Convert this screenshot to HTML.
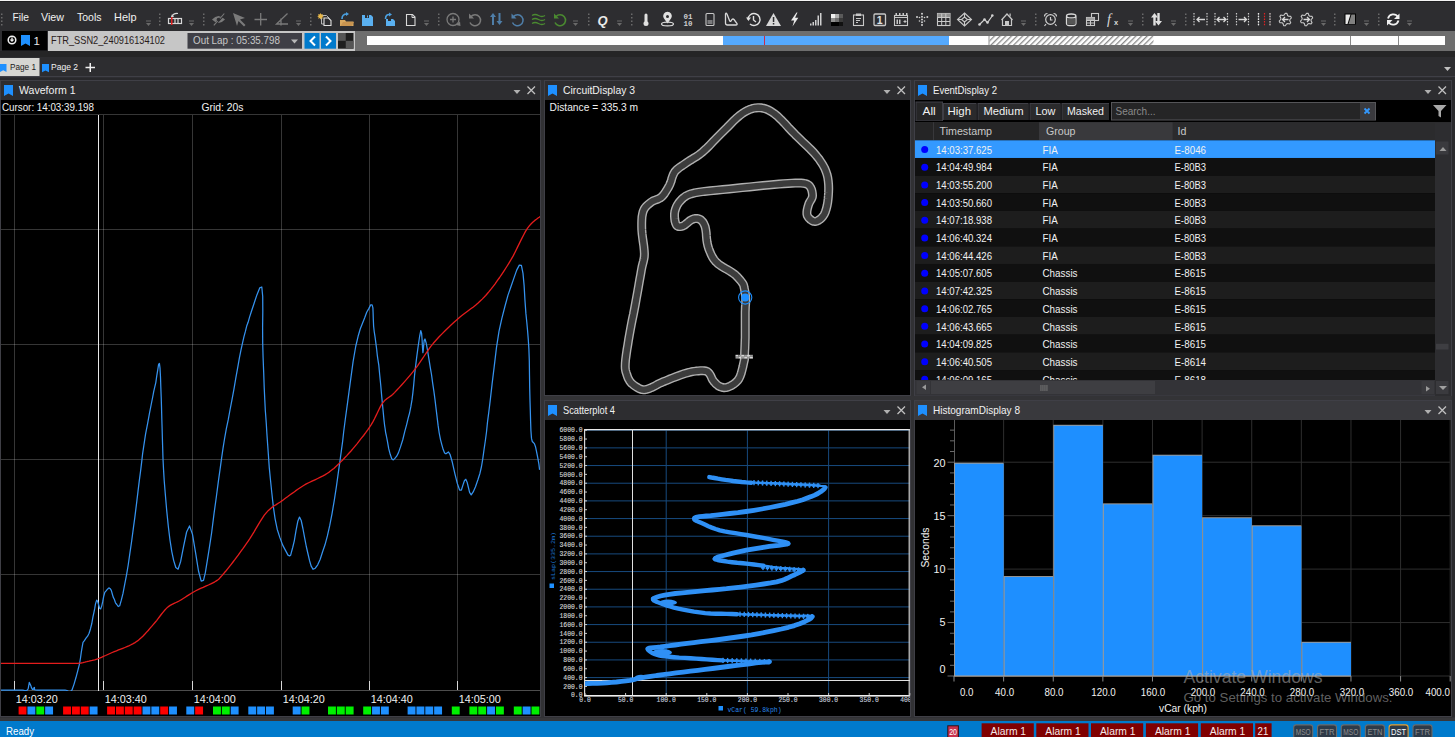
<!DOCTYPE html>
<html><head><meta charset="utf-8">
<style>*{margin:0;padding:0}html,body{width:1455px;height:737px;overflow:hidden;background:#2d2d30}svg{display:block;font-family:"Liberation Sans",sans-serif}</style>
</head><body>
<svg width="1455" height="737" viewBox="0 0 1455 737">
<rect x="0" y="0" width="1455" height="737" fill="#2d2d30"/>

<defs>
<g id="dd"><rect x="0" y="20.5" width="5" height="1" fill="#6a6a6a"/><path d="M0 23h5l-2.5 3z" fill="#6a6a6a"/></g>
<g id="sp" fill="#6a6a6a"><rect x="0" y="13.5" width="1.5" height="1.5"/><rect x="0" y="17" width="1.5" height="1.5"/><rect x="0" y="20.5" width="1.5" height="1.5"/><rect x="0" y="24" width="1.5" height="1.5"/></g>
</defs>
<rect x="0" y="0" width="1455" height="1" fill="#f4f4f4"/><rect x="0" y="1" width="1455" height="1" fill="#1f1f21"/>
<use href="#sp" x="1"/>
<use href="#dd" x="146"/><use href="#sp" x="159"/>
<!-- mixer icon -->
<g fill="none" stroke="#d8d8d8" stroke-width="1.2"><rect x="168.5" y="18.5" width="13" height="5"/><path d="M175 18.5v5M178 18.5v5"/><path d="M172 17 q1-4 6-3.5" /></g><path d="M172 14l2 3h-3z" fill="#d8d8d8"/><rect x="171" y="17" width="1.5" height="8" fill="#e02020"/>
<use href="#dd" x="189"/><use href="#sp" x="203"/>
<!-- eye slash -->
<path d="M212 19.5q6.5-7 13 0q-6.5 7-13 0z" fill="#7a7a7a"/><path d="M214.5 25l10-11" stroke="#2d2d30" stroke-width="2.2"/><path d="M213.8 25.3l10.5-11.8" stroke="#7a7a7a" stroke-width="1.1"/><circle cx="218.5" cy="19.5" r="1.8" fill="#2d2d30"/>
<!-- arrow cursor -->
<path d="M233 13l12 5-5 1.5 5.5 5.5-1.5 1.5-5.5-5.5-1.5 5z" fill="#7a7a7a"/>
<!-- crosshair -->
<g stroke="#7a7a7a" stroke-width="1.3"><path d="M254.5 19.5h12.5M260.7 13v12.5"/></g>
<!-- angle -->
<g stroke="#7a7a7a" stroke-width="1.3" fill="none"><path d="M287.5 13.5l-11 10.5h11.5M281 18.5v7"/></g>
<use href="#dd" x="296"/><use href="#sp" x="310"/>
<!-- new docs -->
<path d="M321.5 15.5h5l2.5 2.5v6h-7.5z" fill="none" stroke="#b8b8b8" stroke-width="1"/>
<path d="M324 18h4.5l2.5 2.5v5h-7z" fill="#2d2d30" stroke="#e0e0e0" stroke-width="1.1"/>
<path d="M320.5 13l.8 1.5 1.6-.6-.6 1.6 1.5.8-1.5.8.6 1.6-1.6-.6-.8 1.5-.8-1.5-1.6.6.6-1.6-1.5-.8 1.5-.8-.6-1.6 1.6.6z" fill="#e8b84a"/>
<!-- open folder -->
<path d="M340 20h5l1 1.5h7.5v4.5h-13.5z" fill="#d8a860"/><path d="M340.5 26l2.5-4h11l-2.5 4z" fill="#c89450"/>
<path d="M342 19q0-5 5-5" fill="none" stroke="#4aa0e0" stroke-width="1.6"/><path d="M346 12l3 2-3 2z" fill="#4aa0e0"/>
<!-- save -->
<path d="M362 15h9l2 2v9h-11z" fill="#5ab0f0"/><rect x="365" y="15" width="4" height="3" fill="#2d2d30"/><rect x="367" y="15.5" width="1" height="2" fill="#5ab0f0"/>
<!-- save as -->
<path d="M386 19h7l2 2v5h-9z" fill="#5ab0f0"/><path d="M385.5 19q0-5 4.5-4.5" fill="none" stroke="#4aa0e0" stroke-width="1.6"/><path d="M389 12.5l3 2-3 2z" fill="#4aa0e0"/><rect x="388" y="19" width="3" height="2" fill="#2d2d30"/>
<!-- blank doc -->
<path d="M406.5 14.5h6l2.5 2.5v8.5h-8.5z" fill="none" stroke="#d8d8d8" stroke-width="1.1"/><path d="M412 14.5v3h3" fill="none" stroke="#d8d8d8" stroke-width="1"/>
<use href="#dd" x="424"/><use href="#sp" x="438"/>
<!-- zoom plus -->
<g fill="none" stroke="#7a7a7a" stroke-width="1.3"><circle cx="453" cy="19.5" r="6"/><path d="M450 19.5h6M453 16.5v6"/></g><path d="M456 25l4.5 1-.5-4.5z" fill="#7a7a7a"/>
<!-- undo gray -->
<g fill="none" stroke="#7a7a7a" stroke-width="1.5"><path d="M471 16.5a5.5 5.5 0 1 1 -1 6"/></g><path d="M469 13.5v5h5z" fill="#7a7a7a"/>
<!-- up down arrows blue gray -->
<g fill="#4f7ea8"><path d="M490 17l3-4 3 4h-2v8h-2v-8z"/><path d="M496.5 21h2v-8h2v8h2l-3 4z"/></g>
<!-- undo blue -->
<g fill="none" stroke="#4f7ea8" stroke-width="1.5"><path d="M513.5 16.5a5.5 5.5 0 1 1 -1 6"/></g><path d="M511.5 13.5v5h5z" fill="#4f7ea8"/>
<!-- waves green -->
<g fill="none" stroke="#4a8a30" stroke-width="1.3"><path d="M532 15.5q3-2 6.5 0t6.5 0M532 19.5q3-2 6.5 0t6.5 0M532 23.5q3-2 6.5 0t6.5 0"/></g>
<!-- undo green -->
<g fill="none" stroke="#4a8a30" stroke-width="1.6"><path d="M556 16.5a5.5 5.5 0 1 1 -1 6"/></g><path d="M554 13.5v5h5z" fill="#4a8a30"/>
<use href="#dd" x="573"/><use href="#sp" x="588"/>
<text x="597.5" y="24.5" font-family="Liberation Sans" font-weight="bold" font-style="italic" font-size="13" fill="#e8e8e8">Q</text>
<use href="#dd" x="617"/><use href="#sp" x="631"/>
<!-- thermometer -->
<rect x="644.5" y="13.5" width="3" height="9" rx="1.5" fill="#e0e0e0"/><circle cx="646" cy="23.5" r="2.5" fill="#e0e0e0"/>
<!-- location -->
<path d="M667.5 23.5l-3.8-5.5a4.3 4.3 0 1 1 7.6 0z" fill="#e0e0e0"/><circle cx="667.5" cy="16.5" r="1.5" fill="#2d2d30"/><ellipse cx="667.5" cy="24" rx="6" ry="1.9" fill="none" stroke="#d8d8d8" stroke-width="1.2"/>
<text x="683.5" y="19" font-family="Liberation Mono" font-weight="bold" font-size="7.5" fill="#d0d0d0">01</text><text x="683.5" y="26" font-family="Liberation Mono" font-weight="bold" font-size="7.5" fill="#d0d0d0">10</text>
<!-- phone -->
<rect x="706" y="13.5" width="8" height="12" rx="1" fill="none" stroke="#c8c8c8" stroke-width="1.1"/><path d="M707.5 21h5M707.5 23h5" stroke="#c8c8c8" stroke-width="1"/>
<!-- track -->
<path d="M725.5 14v9q0 2 2 2h8.5q1.5 0 1-1.5l-3-4q-1-1-2 0l-1 1.5q-1 1-1.5-.5l-2.5-6.5q-1-1.5-1.5 0z" fill="none" stroke="#d8d8d8" stroke-width="1.3"/>
<!-- history -->
<g fill="none" stroke="#e0e0e0" stroke-width="1.4"><path d="M748 19.5a6 6 0 1 1 2 4.5"/><path d="M753.5 16v4l2.5 2"/></g><path d="M746 17.5l2.5 3.5 2.5-3.5z" fill="#e0e0e0"/>
<!-- warning -->
<path d="M773.5 13l7.5 13h-15z" fill="#d8d8d8"/><rect x="772.8" y="17" width="1.5" height="5" fill="#2d2d30"/><rect x="772.8" y="23" width="1.5" height="1.5" fill="#2d2d30"/>
<!-- lightning -->
<path d="M796.5 12.5l-5.5 8h3.2l-1.7 6 5.8-8.7h-3.2l2.4-5.3z" fill="#e8e8e8"/>
<!-- signal bars -->
<g fill="#d0d0d0"><rect x="810" y="23.5" width="1.5" height="2"/><rect x="812.5" y="22" width="1.5" height="3.5"/><rect x="815" y="20" width="1.5" height="5.5"/><rect x="817.5" y="15.5" width="1.5" height="10"/><rect x="820" y="13" width="1.5" height="12.5"/></g>
<!-- heatmap -->
<rect x="831" y="14" width="4" height="4" fill="#f0f0f0"/><rect x="835" y="14" width="4" height="4" fill="#b0b0b0"/><rect x="839" y="14" width="4" height="4" fill="#5a5a5a"/>
<rect x="831" y="18" width="4" height="4" fill="#909090"/><rect x="835" y="18" width="4" height="4" fill="#707070"/><rect x="839" y="18" width="4" height="4" fill="#3a3a3a"/>
<rect x="831" y="22" width="4" height="4" fill="#000"/><rect x="835" y="22" width="4" height="4" fill="#000"/><rect x="839" y="22" width="4" height="4" fill="#111"/>
<!-- clipboard -->
<g fill="none" stroke="#c8c8c8" stroke-width="1.1"><rect x="853.5" y="15" width="10" height="10.5"/><path d="M856 18.5h5M856 20.5h4M856 22.5h2"/></g><rect x="856" y="13.5" width="5" height="2.5" fill="#c8c8c8"/>
<!-- 1 box -->
<rect x="874" y="14" width="11.5" height="11.5" rx="1" fill="none" stroke="#c8c8c8" stroke-width="1.3"/><text x="876.8" y="23.8" font-family="Liberation Sans" font-weight="bold" font-size="10.5" fill="#e0e0e0">1</text>
<!-- calendar -->
<rect x="894.5" y="15.5" width="13" height="10" fill="none" stroke="#c8c8c8" stroke-width="1.1"/><path d="M894.5 17.5h13" stroke="#c8c8c8"/><g fill="#c8c8c8"><rect x="895.5" y="13" width="1.5" height="2"/><rect x="899" y="13" width="1.5" height="2"/><rect x="902.5" y="13" width="1.5" height="2"/><rect x="906" y="13" width="1.5" height="2"/><rect x="896.5" y="19.5" width="1.5" height="4.5"/><rect x="899" y="19.5" width="1.5" height="4.5"/></g><path d="M903.5 21.5h3M905 20v3" stroke="#c8c8c8"/>
<!-- dots cross -->
<g fill="#d0d0d0"><circle cx="922" cy="13.8" r="1"/><circle cx="922" cy="16.8" r="1"/><circle cx="922" cy="19.5" r="1"/><circle cx="922" cy="22.3" r="1"/><circle cx="922" cy="25" r="1"/><circle cx="917" cy="17" r="1"/><circle cx="919.5" cy="17.5" r="0.8"/><circle cx="924.5" cy="17.5" r="0.8"/><circle cx="927.3" cy="17" r="1"/><circle cx="919.5" cy="21" r="0.8"/><circle cx="924.5" cy="21" r="0.8"/></g>
<!-- grid table -->
<rect x="937.5" y="13.5" width="12.5" height="12" fill="none" stroke="#c8c8c8" stroke-width="1.1"/><rect x="937.5" y="13.5" width="12.5" height="4" fill="#909090"/><path d="M937.5 17.5h12.5M937.5 21.5h12.5M941.7 13.5v12M945.8 13.5v12" stroke="#c8c8c8" stroke-width="1"/>
<!-- codepen -->
<g fill="none" stroke="#c8c8c8" stroke-width="1.1"><path d="M964.5 13l7 6.5-7 6.5-7-6.5z"/><path d="M964.5 17l3 2.5-3 2.5-3-2.5z"/><path d="M964.5 13v4M964.5 22v4M957.5 19.5h4M967.5 19.5h4"/></g>
<!-- line chart -->
<path d="M979.5 24.5l5-5 3 3 5-7" fill="none" stroke="#d0d0d0" stroke-width="1.2"/><g fill="#d0d0d0"><circle cx="979.5" cy="24.5" r="1.3"/><circle cx="984.5" cy="19.5" r="1.3"/><circle cx="987.5" cy="22.5" r="1.3"/><circle cx="992.3" cy="15.5" r="1.3"/></g>
<!-- home -->
<path d="M1001.5 20l5.5-6 5.5 6M1002.5 19v6.5h9v-6.5" fill="none" stroke="#c8c8c8" stroke-width="1.2"/><rect x="1005" y="21" width="4" height="4.5" fill="#c8c8c8"/><rect x="1009.5" y="13.5" width="1.2" height="3" fill="#c8c8c8"/>
<use href="#dd" x="1021"/><use href="#sp" x="1035"/>
<!-- alarm -->
<g fill="none" stroke="#d0d0d0" stroke-width="1.2"><circle cx="1050.5" cy="19.5" r="4.8"/><path d="M1050.5 17v3h2M1046 24l-1.5 2M1055 24l1.5 2"/><path d="M1044.5 16.5q0-3 3-3M1056.5 16.5q0-3-3-3"/></g>
<!-- cylinder -->
<g fill="none" stroke="#d8d8d8" stroke-width="1.3"><path d="M1066.5 16.5v7q0 2.2 4.7 2.2t4.7-2.2v-7"/><ellipse cx="1071.2" cy="16" rx="4.7" ry="2"/></g><rect x="1067" y="18.5" width="8.5" height="6" fill="#555"/>
<!-- table window -->
<g fill="none" stroke="#c8c8c8" stroke-width="1.1"><rect x="1091.5" y="13.5" width="7" height="7"/><rect x="1086.5" y="17.5" width="8" height="8" fill="#2d2d30"/><path d="M1086.5 20.5h8M1086.5 23h8M1090.5 17.5v8"/></g><rect x="1086.5" y="17.5" width="8" height="2.5" fill="#a0a0a0"/>
<!-- fx -->
<text x="1107" y="24" font-family="Liberation Serif" font-style="italic" font-size="14" fill="#d8d8d8">f</text><text x="1114" y="24.5" font-family="Liberation Sans" font-weight="bold" font-size="7.5" fill="#d8d8d8">x</text>
<use href="#dd" x="1128"/><use href="#sp" x="1142"/>
<!-- up down white -->
<g fill="#e0e0e0"><path d="M1151 17.5l3.5-4.5 3.5 4.5h-2.3v8h-2.4v-8z"/><path d="M1157.3 13h2.4v8h2.3l-3.5 4.5-3.5-4.5h2.3z"/></g>
<use href="#dd" x="1171"/><use href="#sp" x="1185"/>
<!-- range icons -->
<g stroke="#c8c8c8" stroke-width="1.2" stroke-dasharray="1.5 1.2"><path d="M1194 13v13M1207 13v13M1215 13v13M1227.5 13v13M1236.5 13v13M1248.5 13v13M1258.5 13v13M1270 13v13"/></g>
<path d="M1258.5 13v13" stroke="#e8e8e8" stroke-width="1.2" stroke-dasharray="1.5 1.2"/><path d="M1264.5 13v13" stroke="#e02020" stroke-width="1.2" stroke-dasharray="1.5 1.2"/><path d="M1270 13v13" stroke="#9a8a8a" stroke-width="1.2" stroke-dasharray="1.5 1.2"/>
<g fill="none" stroke="#d8d8d8" stroke-width="1.3"><path d="M1205 19.5h-8M1199.5 17l-2.5 2.5 2.5 2.5"/><path d="M1217 19.5h9M1219.5 17l-2.5 2.5 2.5 2.5M1223.5 17l2.5 2.5-2.5 2.5"/><path d="M1238.5 19.5h8M1244 17l2.5 2.5-2.5 2.5"/></g>
<!-- gears -->
<g fill="none" stroke="#c8c8c8" stroke-width="1.1" stroke-linejoin="round"><path d="M1285.30 13.20 L1286.93 13.41 L1287.60 15.52 L1288.55 16.25 L1290.76 16.35 L1291.39 17.87 L1289.90 19.50 L1289.74 20.69 L1290.76 22.65 L1289.75 23.95 L1287.60 23.48 L1286.49 23.94 L1285.30 25.80 L1283.67 25.59 L1283.00 23.48 L1282.05 22.75 L1279.84 22.65 L1279.21 21.13 L1280.70 19.50 L1280.86 18.31 L1279.84 16.35 L1280.85 15.05 L1283.00 15.52 L1284.11 15.06Z"/><path d="M1306.60 13.20 L1308.23 13.41 L1308.90 15.52 L1309.85 16.25 L1312.06 16.35 L1312.69 17.87 L1311.20 19.50 L1311.04 20.69 L1312.06 22.65 L1311.05 23.95 L1308.90 23.48 L1307.79 23.94 L1306.60 25.80 L1304.97 25.59 L1304.30 23.48 L1303.35 22.75 L1301.14 22.65 L1300.51 21.13 L1302.00 19.50 L1302.16 18.31 L1301.14 16.35 L1302.15 15.05 L1304.30 15.52 L1305.41 15.06Z"/></g>
<path d="M1288.5 19.5h-6M1285 17l-2.5 2.5 2.5 2.5M1303.5 19.5h6M1307 17l2.5 2.5-2.5 2.5" fill="none" stroke="#d8d8d8" stroke-width="1.3"/>
<use href="#dd" x="1321"/><use href="#sp" x="1334"/>
<!-- contrast -->
<rect x="1344.5" y="13.5" width="11.5" height="11" fill="#000"/><path d="M1345.5 14.5h5l-3 9.5h-2z" fill="#e8e8e8"/><path d="M1351.5 14.5h3.5v9.5h-6.5z" fill="#808080"/>
<use href="#dd" x="1364"/><use href="#sp" x="1378"/>
<!-- refresh -->
<g fill="none" stroke="#f0f0f0" stroke-width="1.8"><path d="M1388 18.5a5.5 5.5 0 0 1 10-1.5"/><path d="M1398.5 20.5a5.5 5.5 0 0 1 -10 1.5"/></g><path d="M1399.5 13.5v5.5h-5.5z" fill="#f0f0f0"/><path d="M1387 25.5v-5.5h5.5z" fill="#f0f0f0"/>
<use href="#dd" x="1407"/>

<text x="12.5" y="21.2" font-size="11.5" fill="#f1f1f1" textLength="16.5" lengthAdjust="spacingAndGlyphs">File</text>
<text x="41" y="21.2" font-size="11.5" fill="#f1f1f1" textLength="23" lengthAdjust="spacingAndGlyphs">View</text>
<text x="77" y="21.2" font-size="11.5" fill="#f1f1f1" textLength="24.5" lengthAdjust="spacingAndGlyphs">Tools</text>
<text x="114" y="21.2" font-size="11.5" fill="#f1f1f1" textLength="22.5" lengthAdjust="spacingAndGlyphs">Help</text>
<rect x="355" y="31" width="1100" height="20" fill="#6e6e6e"/>
<rect x="2" y="31" width="45" height="19.5" fill="#000"/>
<rect x="48" y="31" width="307" height="20" fill="#c6c6c6"/>
<circle cx="12" cy="40" r="3.8" fill="none" stroke="#f0f0f0" stroke-width="1.5"/><path d="M9.5 39.5h5l-2.5 2.5z" fill="#f0f0f0"/><rect x="11.3" y="37.5" width="1.4" height="2.5" fill="#f0f0f0"/>
<path d="M21 35h9v11l-4.5 -2.42l-4.5 2.42z" fill="#1e90ff"/>
<text x="33.5" y="44.5" font-size="11.5" fill="#e8e8e8">1</text>
<text x="51" y="44.3" font-size="11.5" fill="#2a1c1c" textLength="114" lengthAdjust="spacingAndGlyphs">FTR_SSN2_240916134102</text>
<rect x="187.5" y="33" width="114.5" height="15.7" fill="#3f3f46"/>
<text x="193" y="44.3" font-size="11.5" fill="#c8c8c8" textLength="87" lengthAdjust="spacingAndGlyphs">Out Lap : 05:35.798</text>
<path d="M291 39.5h7l-3.5 4z" fill="#b8b8b8"/>
<rect x="304.5" y="33" width="15" height="15.7" fill="#007acc"/>
<rect x="321" y="33" width="15" height="15.7" fill="#007acc"/>
<path d="M315 36.5l-4.5 4.5 4.5 4.5" fill="none" stroke="#fff" stroke-width="2"/><path d="M326 36.5l4.5 4.5-4.5 4.5" fill="none" stroke="#fff" stroke-width="2"/>
<rect x="338" y="33" width="15.5" height="15.7" fill="#1e1e1e"/>
<rect x="338" y="33" width="7.75" height="7.85" fill="#555"/>
<rect x="345.75" y="40.85" width="7.75" height="7.85" fill="#555"/>
<rect x="367" y="36" width="1078" height="9" fill="#ffffff"/>
<rect x="723" y="36" width="226" height="9" fill="#55aaff"/>
<rect x="764" y="36" width="1" height="9" fill="#d02848"/>
<defs><pattern id="hatch" width="4" height="4" patternUnits="userSpaceOnUse" patternTransform="rotate(45)"><rect width="4" height="4" fill="#fff"/><rect width="1.3" height="4" fill="#8a8a8a"/></pattern></defs>
<rect x="989.5" y="36" width="164" height="9" fill="url(#hatch)"/>
<rect x="988.5" y="36" width="1" height="9" fill="#909090"/>
<rect x="1350" y="36" width="1" height="9" fill="#8a8a8a"/>
<rect x="1398" y="36" width="1" height="9" fill="#8a8a8a"/>
<rect x="0" y="51" width="1455" height="6" fill="#252526"/>
<rect x="0" y="57" width="1455" height="19" fill="#2d2d30"/>
<rect x="0" y="58" width="39.5" height="18" fill="#d6d6d2"/>
<path d="M0 64h6.5v8l-3.25 -1.7599999999999998l-3.25 1.7599999999999998z" fill="#1e90ff"/>
<text x="10" y="69.8" font-size="8.7" fill="#1a1a1a" textLength="26" lengthAdjust="spacingAndGlyphs">Page 1</text>
<path d="M42 64h7v8.3l-3.5 -1.8259999999999996l-3.5 1.8259999999999996z" fill="#1e90ff"/>
<text x="51" y="69.8" font-size="8.7" fill="#f1f1f1" textLength="27" lengthAdjust="spacingAndGlyphs">Page 2</text>
<path d="M85.5 67.5h9.5M90.25 63v9" stroke="#f0f0f0" stroke-width="1.5"/>
<path d="M1444 67h7l-3.5 4z" fill="#c0c0c0"/>
<rect x="0" y="76" width="1455" height="1.5" fill="#3f3f46"/>
<rect x="0" y="77.5" width="1455" height="2.5" fill="#28282b"/>
<rect x="0" y="80" width="541" height="637" fill="#3f3f46"/>
<rect x="1" y="81" width="539" height="19" fill="#2d2d30"/>
<rect x="1" y="100" width="539" height="616" fill="#000"/>
<path d="M4 85h9v11l-4.5 -2.42l-4.5 2.42z" fill="#1e90ff"/>
<text x="19" y="94" font-size="11.5" fill="#f1f1f1" textLength="56.5" lengthAdjust="spacingAndGlyphs">Waveform 1</text>
<path d="M513.5 90h7l-3.5 4z" fill="#b0b0b0"/>
<path d="M527.5 86.5l7.5 7.5M535.0 86.5l-7.5 7.5" stroke="#c0c0c0" stroke-width="1.3"/>
<rect x="544" y="80" width="367" height="316" fill="#3f3f46"/>
<rect x="545" y="81" width="365" height="19" fill="#2d2d30"/>
<rect x="545" y="100" width="365" height="295" fill="#000"/>
<path d="M548 85h9v11l-4.5 -2.42l-4.5 2.42z" fill="#1e90ff"/>
<text x="563" y="94" font-size="11.5" fill="#f1f1f1" textLength="72" lengthAdjust="spacingAndGlyphs">CircuitDisplay 3</text>
<path d="M883.5 90h7l-3.5 4z" fill="#b0b0b0"/>
<path d="M897.5 86.5l7.5 7.5M905.0 86.5l-7.5 7.5" stroke="#c0c0c0" stroke-width="1.3"/>
<rect x="914" y="80" width="538" height="316" fill="#3f3f46"/>
<rect x="915" y="81" width="536" height="19" fill="#2d2d30"/>
<rect x="915" y="100" width="536" height="295" fill="#000"/>
<path d="M918 85h9v11l-4.5 -2.42l-4.5 2.42z" fill="#1e90ff"/>
<text x="933" y="94" font-size="11.5" fill="#f1f1f1" textLength="64" lengthAdjust="spacingAndGlyphs">EventDisplay 2</text>
<path d="M1424.5 90h7l-3.5 4z" fill="#b0b0b0"/>
<path d="M1438.5 86.5l7.5 7.5M1446.0 86.5l-7.5 7.5" stroke="#c0c0c0" stroke-width="1.3"/>
<rect x="544" y="400" width="367" height="317" fill="#3f3f46"/>
<rect x="545" y="401" width="365" height="19" fill="#2d2d30"/>
<rect x="545" y="420" width="365" height="296" fill="#000"/>
<path d="M548 405h9v11l-4.5 -2.42l-4.5 2.42z" fill="#1e90ff"/>
<text x="563" y="414" font-size="11.5" fill="#f1f1f1" textLength="52" lengthAdjust="spacingAndGlyphs">Scatterplot 4</text>
<path d="M883.5 410h7l-3.5 4z" fill="#b0b0b0"/>
<path d="M897.5 406.5l7.5 7.5M905.0 406.5l-7.5 7.5" stroke="#c0c0c0" stroke-width="1.3"/>
<rect x="914" y="400" width="538" height="317" fill="#3f3f46"/>
<rect x="915" y="401" width="536" height="19" fill="#39393d"/>
<rect x="915" y="420" width="536" height="296" fill="#000"/>
<path d="M918 405h9v11l-4.5 -2.42l-4.5 2.42z" fill="#1e90ff"/>
<text x="933" y="414" font-size="11.5" fill="#f1f1f1" textLength="87" lengthAdjust="spacingAndGlyphs">HistogramDisplay 8</text>
<path d="M1424.5 410h7l-3.5 4z" fill="#b0b0b0"/>
<path d="M1438.5 406.5l7.5 7.5M1446.0 406.5l-7.5 7.5" stroke="#c0c0c0" stroke-width="1.3"/>
<rect x="541" y="80" width="3" height="637" fill="#313134"/>
<rect x="911" y="80" width="3" height="637" fill="#313134"/>
<rect x="544" y="396" width="908" height="4" fill="#333336"/>
<rect x="1452" y="77" width="3" height="640" fill="#2a2a2d"/>
<rect x="0" y="717.5" width="1455" height="3.5" fill="#37373a"/>
<text x="2" y="111" font-size="11" fill="#f1f1f1" textLength="92" lengthAdjust="spacingAndGlyphs">Cursor: 14:03:39.198</text>
<text x="201.5" y="111" font-size="11" fill="#f1f1f1" textLength="42" lengthAdjust="spacingAndGlyphs">Grid: 20s</text>
<rect x="1" y="114" width="539" height="1" fill="rgba(255,255,255,0.21)"/>
<rect x="1" y="229" width="539" height="1" fill="rgba(255,255,255,0.21)"/>
<rect x="1" y="344" width="539" height="1" fill="rgba(255,255,255,0.21)"/>
<rect x="1" y="459" width="539" height="1" fill="rgba(255,255,255,0.21)"/>
<rect x="1" y="574" width="539" height="1" fill="rgba(255,255,255,0.21)"/>
<rect x="1" y="690" width="539" height="1" fill="rgba(255,255,255,0.3)"/>
<rect x="14" y="115" width="1" height="575" fill="rgba(255,255,255,0.21)"/>
<rect x="103" y="115" width="1" height="575" fill="rgba(255,255,255,0.21)"/>
<rect x="192" y="115" width="1" height="575" fill="rgba(255,255,255,0.21)"/>
<rect x="281" y="115" width="1" height="575" fill="rgba(255,255,255,0.21)"/>
<rect x="369" y="115" width="1" height="575" fill="rgba(255,255,255,0.21)"/>
<rect x="457" y="115" width="1" height="575" fill="rgba(255,255,255,0.21)"/>
<rect x="98" y="115" width="1" height="576" fill="#e8e8e8"/>
<rect x="14" y="681" width="1" height="9" fill="#d8d8d8"/>
<rect x="103" y="681" width="1" height="9" fill="#d8d8d8"/>
<rect x="192" y="681" width="1" height="9" fill="#d8d8d8"/>
<rect x="281" y="681" width="1" height="9" fill="#d8d8d8"/>
<rect x="369" y="681" width="1" height="9" fill="#d8d8d8"/>
<rect x="457" y="681" width="1" height="9" fill="#d8d8d8"/>
<text x="15.8" y="702.7" font-size="10.3" fill="#f1f1f1" textLength="42" lengthAdjust="spacingAndGlyphs">14:03:20</text>
<text x="104.8" y="702.7" font-size="10.3" fill="#f1f1f1" textLength="42" lengthAdjust="spacingAndGlyphs">14:03:40</text>
<text x="193.8" y="702.7" font-size="10.3" fill="#f1f1f1" textLength="42" lengthAdjust="spacingAndGlyphs">14:04:00</text>
<text x="282.8" y="702.7" font-size="10.3" fill="#f1f1f1" textLength="42" lengthAdjust="spacingAndGlyphs">14:04:20</text>
<text x="370.8" y="702.7" font-size="10.3" fill="#f1f1f1" textLength="42" lengthAdjust="spacingAndGlyphs">14:04:40</text>
<text x="458.8" y="702.7" font-size="10.3" fill="#f1f1f1" textLength="42" lengthAdjust="spacingAndGlyphs">14:05:00</text>
<rect x="18.6" y="706.5" width="7.9" height="8" fill="#ff0000"/>
<rect x="27.45" y="706.5" width="7.9" height="8" fill="#1e90ff"/>
<rect x="36.3" y="706.5" width="7.9" height="8" fill="#00f000"/>
<rect x="45.15" y="706.5" width="7.9" height="8" fill="#1e90ff"/>
<rect x="63.1" y="706.5" width="7.9" height="8" fill="#ff0000"/>
<rect x="71.95" y="706.5" width="7.9" height="8" fill="#ff0000"/>
<rect x="80.8" y="706.5" width="7.9" height="8" fill="#ff0000"/>
<rect x="89.65" y="706.5" width="7.9" height="8" fill="#1e90ff"/>
<rect x="107.1" y="706.5" width="7.9" height="8" fill="#ff0000"/>
<rect x="115.95" y="706.5" width="7.9" height="8" fill="#ff0000"/>
<rect x="124.8" y="706.5" width="7.9" height="8" fill="#ff0000"/>
<rect x="133.65" y="706.5" width="7.9" height="8" fill="#ff0000"/>
<rect x="142.5" y="706.5" width="7.9" height="8" fill="#1e90ff"/>
<rect x="151.35" y="706.5" width="7.9" height="8" fill="#1e90ff"/>
<rect x="160.2" y="706.5" width="7.9" height="8" fill="#ff0000"/>
<rect x="169.05" y="706.5" width="7.9" height="8" fill="#1e90ff"/>
<rect x="186.3" y="706.5" width="7.9" height="8" fill="#1e90ff"/>
<rect x="195.15" y="706.5" width="7.9" height="8" fill="#ff0000"/>
<rect x="213.0" y="706.5" width="7.9" height="8" fill="#00f000"/>
<rect x="221.85" y="706.5" width="7.9" height="8" fill="#00f000"/>
<rect x="230.7" y="706.5" width="7.9" height="8" fill="#1e90ff"/>
<rect x="248.3" y="706.5" width="7.9" height="8" fill="#1e90ff"/>
<rect x="257.15" y="706.5" width="7.9" height="8" fill="#1e90ff"/>
<rect x="266.0" y="706.5" width="7.9" height="8" fill="#1e90ff"/>
<rect x="292.7" y="706.5" width="7.9" height="8" fill="#1e90ff"/>
<rect x="301.55" y="706.5" width="7.9" height="8" fill="#00f000"/>
<rect x="328.0" y="706.5" width="7.9" height="8" fill="#00f000"/>
<rect x="336.85" y="706.5" width="7.9" height="8" fill="#00f000"/>
<rect x="345.7" y="706.5" width="7.9" height="8" fill="#00f000"/>
<rect x="363.2" y="706.5" width="7.9" height="8" fill="#00f000"/>
<rect x="372.05" y="706.5" width="7.9" height="8" fill="#1e90ff"/>
<rect x="380.9" y="706.5" width="7.9" height="8" fill="#1e90ff"/>
<rect x="407.6" y="706.5" width="7.9" height="8" fill="#1e90ff"/>
<rect x="416.45" y="706.5" width="7.9" height="8" fill="#1e90ff"/>
<rect x="425.3" y="706.5" width="7.9" height="8" fill="#1e90ff"/>
<rect x="434.15" y="706.5" width="7.9" height="8" fill="#1e90ff"/>
<rect x="451.8" y="706.5" width="7.9" height="8" fill="#00f000"/>
<rect x="469.4" y="706.5" width="7.9" height="8" fill="#00f000"/>
<rect x="478.25" y="706.5" width="7.9" height="8" fill="#00f000"/>
<rect x="487.1" y="706.5" width="7.9" height="8" fill="#1e90ff"/>
<rect x="495.95" y="706.5" width="7.9" height="8" fill="#00f000"/>
<rect x="513.8" y="706.5" width="7.9" height="8" fill="#00f000"/>
<rect x="522.65" y="706.5" width="7.9" height="8" fill="#1e90ff"/>
<rect x="531.5" y="706.5" width="7.9" height="8" fill="#00f000"/>
<svg x="1" y="100" width="539" height="591" viewBox="1 100 539 591" overflow="hidden">
<polyline points="1.0,690.0 2.6,690.0 4.9,690.0 7.5,690.0 10.0,690.0 12.5,690.0 15.1,690.0 17.7,690.0 20.0,690.0 22.2,690.2 24.3,690.4 26.1,690.5 27.5,690.0 28.3,688.2 28.7,685.7 29.0,684.3 29.3,682.4 29.8,683.5 30.4,684.8 31.0,686.1 31.5,688.0 31.9,688.0 32.3,689.2 32.6,689.4 33.0,689.5 33.4,689.3 33.7,688.6 34.1,687.6 34.4,687.4 34.5,688.2 34.4,689.4 34.6,689.6 35.4,690.0 37.2,690.1 39.6,690.1 42.4,690.0 45.0,690.0 47.5,690.0 50.0,690.0 52.5,690.0 55.0,690.0 57.6,690.0 60.2,690.0 62.7,690.0 65.0,690.0 67.0,690.6 68.7,691.6 70.3,691.8 72.0,690.0 73.9,684.6 75.9,677.8 77.8,670.7 79.4,664.3 80.5,658.0 81.3,652.1 82.0,647.9 83.0,642.4 84.4,640.7 86.0,638.2 87.6,636.2 89.1,633.3 90.5,628.7 91.8,623.5 93.0,616.6 94.0,612.1 94.8,608.2 95.4,604.3 96.0,602.1 96.7,600.2 97.6,601.4 98.6,604.8 99.7,608.5 100.7,608.9 101.7,606.1 102.7,601.7 103.7,596.4 104.8,592.4 106.1,590.9 107.5,589.2 108.9,587.9 110.2,588.7 111.3,590.4 112.3,594.0 113.2,597.1 114.3,599.2 115.5,602.8 116.8,604.5 118.2,606.5 119.7,605.8 121.3,600.2 123.0,593.4 124.8,583.9 126.5,575.2 128.2,565.0 129.9,553.2 131.6,541.5 133.3,528.6 134.9,516.8 136.5,503.9 138.0,491.4 139.4,479.9 140.6,470.9 141.6,462.7 142.6,453.9 143.9,445.2 145.6,433.9 147.6,423.6 149.6,412.6 151.3,404.0 152.7,397.0 153.8,391.1 154.8,386.8 155.8,382.6 156.8,375.7 157.8,369.7 158.6,364.4 159.4,363.4 160.0,367.8 160.5,377.2 160.8,386.6 161.2,396.9 161.5,407.0 161.8,418.3 162.1,427.9 162.4,439.0 162.7,449.0 163.0,459.0 163.5,468.9 164.2,480.5 165.3,494.0 166.7,510.4 168.3,526.2 170.0,540.2 171.8,551.6 173.7,560.6 175.8,567.5 178.1,569.2 180.7,561.2 183.6,546.3 186.6,532.0 189.5,525.9 192.5,534.4 195.6,552.8 198.5,571.0 201.2,581.1 203.5,580.4 205.4,572.4 207.3,560.7 209.3,548.1 211.6,533.0 214.0,513.8 216.4,496.5 218.5,480.4 220.2,468.4 221.6,458.1 223.0,448.4 224.5,439.0 226.3,428.8 228.2,419.9 230.1,409.5 232.0,399.7 233.9,389.3 235.8,378.2 237.7,367.7 239.4,357.9 241.0,349.9 242.5,343.2 243.9,336.9 245.4,331.4 246.8,325.7 248.1,322.3 249.5,317.4 251.3,311.7 253.8,304.2 256.9,294.9 259.7,287.9 261.8,287.0 262.7,296.3 262.8,311.2 262.6,327.6 262.7,343.6 263.1,357.7 263.7,372.8 264.2,387.6 264.8,400.0 265.3,410.3 265.8,416.8 266.3,423.8 266.9,433.7 267.6,443.8 268.4,455.0 269.3,467.9 270.4,479.3 271.8,492.7 273.3,506.4 275.1,518.8 277.2,529.2 279.8,537.4 282.7,545.1 285.6,550.6 288.0,555.1 289.6,555.9 290.6,555.3 291.5,551.8 292.7,547.5 294.3,540.8 296.0,530.7 297.8,521.3 299.5,517.1 301.2,520.5 302.9,528.5 304.6,537.7 306.3,546.5 307.9,553.5 309.5,560.4 311.2,566.2 313.1,569.3 315.3,568.2 317.7,564.8 320.2,559.3 322.6,551.8 325.0,544.8 327.4,535.9 329.7,525.7 332.0,513.8 334.2,500.8 336.4,486.6 338.4,472.2 340.2,459.3 341.5,449.7 342.6,441.6 343.6,432.5 345.2,420.0 347.5,403.1 350.2,382.9 353.1,361.7 355.7,346.5 358.1,336.3 360.3,328.8 362.5,323.3 364.6,318.0 366.7,312.3 368.8,308.6 370.7,304.9 372.1,304.9 372.9,307.9 373.1,312.5 373.3,319.0 373.6,326.0 374.2,331.5 375.0,336.7 375.8,342.7 376.6,348.8 377.3,355.3 378.0,360.2 378.8,365.1 379.6,373.7 380.7,384.7 381.8,397.4 383.0,409.8 384.0,420.1 384.6,425.3 385.1,428.5 385.6,432.3 386.3,435.5 387.4,441.2 388.7,448.7 390.2,454.3 391.7,458.8 393.3,459.9 394.9,458.4 396.7,456.2 398.5,452.6 400.5,446.9 402.7,440.0 404.8,431.4 406.7,424.3 408.3,417.7 409.6,413.0 410.9,406.4 412.0,399.9 412.9,392.6 413.7,384.9 414.5,375.7 415.4,367.8 416.7,357.1 418.2,346.0 419.6,336.5 420.8,330.7 421.6,333.4 422.1,340.0 422.5,347.5 422.9,352.7 423.3,349.9 423.7,345.1 424.2,340.4 425.0,339.0 426.1,342.7 427.5,350.2 428.9,358.9 430.3,367.6 431.5,374.5 432.7,383.4 433.9,391.4 435.0,399.7 436.1,408.8 437.1,417.1 438.1,425.4 439.2,433.0 440.5,439.6 441.8,444.6 443.2,449.6 444.6,452.9 445.9,453.8 447.0,452.9 448.4,451.9 450.0,454.3 452.2,461.8 454.8,473.3 457.3,483.4 459.6,490.0 461.4,490.0 463.0,484.9 464.4,480.7 465.8,479.3 467.1,482.2 468.3,487.0 469.6,492.4 471.2,494.9 473.2,491.9 475.5,486.8 477.9,479.8 479.9,473.5 481.5,466.5 482.8,458.7 484.1,449.2 485.3,441.0 486.5,432.0 487.5,422.1 488.7,412.9 490.2,400.7 492.1,383.9 494.2,366.6 496.5,347.4 499.0,331.4 501.8,318.7 504.9,306.5 508.0,295.1 511.0,286.5 513.9,278.1 516.7,270.1 519.3,265.1 521.4,265.4 523.0,273.4 524.1,285.4 525.0,300.9 525.9,313.4 526.8,322.3 527.6,331.0 528.3,339.8 528.9,349.3 529.3,360.6 529.5,375.2 529.7,388.3 530.0,400.7 530.3,410.5 530.6,421.3 530.9,430.3 531.5,438.4 532.3,441.5 533.3,442.5 534.4,443.6 535.5,446.7 536.6,451.8 537.8,457.8 538.9,464.2 539.6,469.8" fill="none" stroke="#3592ee" stroke-width="1.25" stroke-linejoin="round"/>
<polyline points="1.0,663.4 2.5,663.4 4.4,663.4 6.7,663.4 9.2,663.4 12.0,663.4 14.7,663.4 17.4,663.4 20.0,663.4 22.5,663.4 24.9,663.4 27.4,663.4 29.9,663.4 32.5,663.4 35.0,663.4 37.5,663.4 40.0,663.4 42.6,663.4 45.2,663.4 47.9,663.4 50.5,663.4 53.1,663.4 55.6,663.4 57.9,663.4 60.0,663.4 61.9,663.4 63.7,663.4 65.3,663.4 66.8,663.4 68.1,663.4 69.5,663.4 70.7,663.4 72.0,663.4 73.2,663.4 74.3,663.4 75.3,663.4 76.3,663.4 77.2,663.3 78.1,663.3 79.0,663.2 80.0,663.1 81.0,663.0 81.9,662.8 82.9,662.6 83.8,662.3 84.8,662.1 85.8,661.8 86.8,661.6 87.9,661.3 89.0,661.1 90.1,660.8 91.1,660.6 92.3,660.4 93.4,660.1 94.7,659.8 96.1,659.3 97.7,658.8 99.5,658.1 101.4,657.3 103.4,656.4 105.6,655.5 107.8,654.5 110.0,653.5 112.2,652.5 114.3,651.6 116.4,650.8 118.5,649.9 120.7,649.1 122.8,648.3 124.9,647.5 126.9,646.7 128.8,645.9 130.6,645.0 132.2,644.2 133.6,643.4 135.0,642.6 136.2,641.8 137.5,640.9 138.7,639.9 140.0,638.8 141.5,637.5 143.1,636.0 144.7,634.3 146.4,632.4 148.2,630.5 149.9,628.4 151.7,626.4 153.4,624.4 155.0,622.5 156.6,620.6 158.1,618.6 159.7,616.5 161.2,614.5 162.7,612.6 164.2,610.8 165.7,609.1 167.2,607.6 168.7,606.4 170.2,605.4 171.6,604.6 173.1,603.9 174.6,603.2 176.1,602.5 177.8,601.7 179.5,600.8 181.3,599.7 183.2,598.5 185.2,597.2 187.2,595.9 189.3,594.6 191.4,593.3 193.6,592.0 195.8,590.8 198.1,589.6 200.6,588.4 203.2,587.3 205.8,586.1 208.4,585.0 210.8,583.9 212.9,582.8 214.8,581.8 216.3,580.9 217.5,580.1 218.4,579.4 219.2,578.7 219.9,577.9 220.7,577.0 221.7,575.9 222.9,574.5 224.3,572.8 225.9,571.0 227.6,568.9 229.4,566.7 231.2,564.4 233.0,562.0 234.8,559.7 236.5,557.4 238.2,555.2 239.8,552.9 241.4,550.7 243.1,548.4 244.7,546.1 246.4,543.7 248.2,541.1 250.0,538.4 251.9,535.4 253.9,532.1 255.9,528.6 258.0,525.1 260.1,521.6 262.2,518.3 264.3,515.2 266.4,512.6 268.4,510.4 270.4,508.7 272.3,507.1 274.2,505.8 276.2,504.6 278.2,503.3 280.3,502.0 282.6,500.4 285.0,498.6 287.5,496.8 290.1,494.8 292.8,492.9 295.5,490.9 298.2,489.0 300.9,487.2 303.6,485.5 306.3,483.9 309.2,482.5 312.0,481.1 314.9,479.8 317.7,478.5 320.4,477.2 323.0,475.9 325.3,474.6 327.4,473.3 329.2,472.1 330.8,470.8 332.4,469.6 333.9,468.4 335.4,467.0 337.0,465.5 338.8,463.8 340.7,461.9 342.7,460.0 344.7,457.8 346.8,455.6 348.9,453.3 351.0,451.0 353.0,448.6 355.1,446.1 357.2,443.6 359.3,440.9 361.4,438.2 363.6,435.5 365.7,432.7 367.7,429.9 369.6,427.1 371.4,424.4 373.0,421.6 374.5,418.8 375.9,415.9 377.3,413.0 378.6,410.2 379.9,407.6 381.2,405.1 382.6,403.0 384.0,401.3 385.3,399.9 386.6,398.9 387.9,398.0 389.3,397.0 390.9,395.9 392.6,394.5 394.5,392.6 396.7,390.3 399.2,387.6 401.8,384.7 404.6,381.6 407.4,378.4 410.2,375.1 412.9,371.9 415.4,368.7 417.7,365.6 419.9,362.4 422.1,359.2 424.2,356.0 426.3,352.8 428.5,349.6 430.8,346.4 433.3,343.3 436.0,340.2 438.9,337.0 442.0,333.9 445.1,330.8 448.2,327.7 451.3,324.8 454.3,322.0 457.2,319.4 460.0,317.0 462.8,314.8 465.5,312.7 468.2,310.7 470.8,308.8 473.4,306.9 475.8,305.0 478.1,303.0 480.2,301.0 482.2,299.1 484.0,297.3 485.7,295.5 487.4,293.5 489.2,291.4 491.0,289.2 493.0,286.6 495.1,283.8 497.3,280.7 499.6,277.5 501.9,274.1 504.2,270.6 506.5,267.0 508.8,263.3 511.0,259.7 513.2,255.9 515.3,251.7 517.4,247.4 519.5,243.1 521.6,238.9 523.6,235.0 525.5,231.4 527.4,228.4 529.3,225.9 531.2,223.8 533.0,222.0 534.8,220.4 536.5,219.2 538.0,218.1 539.2,217.2 540.2,216.4" fill="none" stroke="#e41c1c" stroke-width="1.3" stroke-linejoin="round"/>
</svg>
<text x="549.5" y="111.1" font-size="11.4" fill="#f1f1f1" textLength="88.5" lengthAdjust="spacingAndGlyphs">Distance = 335.3 m</text>
<path d="M744.5 356.0 L744.6 353.8 L744.7 351.2 L744.9 348.2 L745.0 344.9 L745.1 341.5 L745.2 337.9 L745.2 333.9 L745.2 329.5 L745.2 324.9 L745.2 320.4 L745.2 316.1 L745.2 312.4 L745.3 309.3 L745.4 306.7 L745.6 304.3 L745.7 302.1 L745.7 300.1 L745.7 298.0 L745.5 295.9 L745.3 293.8 L745.0 291.9 L744.6 290.0 L744.3 288.4 L744.0 287.0 L743.8 285.9 L743.6 285.2 L743.4 284.6 L743.1 284.2 L742.8 283.6 L742.3 282.9 L741.7 282.0 L740.9 281.0 L740.0 279.9 L739.0 278.8 L738.1 277.7 L737.2 276.8 L736.4 276.0 L735.8 275.4 L735.2 274.8 L734.4 274.2 L733.3 273.4 L731.8 272.3 L729.7 271.0 L727.0 269.4 L724.0 267.8 L721.0 265.9 L718.2 263.9 L715.9 261.8 L714.0 259.5 L712.4 257.0 L711.1 254.4 L709.9 251.6 L708.8 248.8 L707.9 245.9 L707.2 242.8 L706.7 239.5 L706.4 236.1 L706.2 232.8 L705.8 229.8 L705.3 227.3 L704.6 225.3 L703.8 223.6 L703.0 222.2 L702.1 221.1 L701.1 220.1 L700.0 219.4 L698.8 218.9 L697.6 218.6 L696.3 218.5 L694.9 218.6 L693.5 218.9 L692.1 219.4 L690.6 220.2 L689.0 221.4 L687.4 222.8 L685.8 224.1 L684.2 225.3 L682.8 226.0 L681.5 226.4 L680.2 226.6 L679.0 226.6 L677.9 226.3 L677.0 225.7 L676.2 224.7 L675.6 223.2 L675.0 221.1 L674.7 218.8 L674.5 216.2 L674.5 213.8 L674.8 211.5 L675.4 209.4 L676.2 207.2 L677.2 205.1 L678.5 203.1 L679.9 201.3 L681.5 199.6 L683.1 198.1 L684.6 196.9 L686.4 195.7 L688.5 194.7 L691.2 193.8 L694.7 192.9 L699.1 192.1 L704.4 191.4 L710.2 190.8 L716.5 190.2 L722.8 189.6 L729.1 189.0 L735.6 188.3 L742.4 187.6 L749.4 186.9 L756.3 186.2 L762.9 185.5 L768.8 185.0 L774.1 184.5 L779.1 184.1 L783.7 183.7 L787.9 183.4 L791.8 183.2 L795.3 183.1 L798.4 183.1 L801.0 183.1 L803.3 183.3 L805.3 183.6 L807.0 184.1 L808.5 185.0 L809.8 186.3 L810.8 187.9 L811.6 189.8 L812.1 191.8 L812.4 193.8 L812.5 195.6 L812.3 197.2 L811.7 198.7 L810.8 200.2 L809.9 201.7 L809.1 203.2 L808.5 204.8 L808.0 206.5 L807.5 208.4 L807.1 210.3 L806.9 212.1 L806.9 213.9 L807.2 215.4 L808.0 216.8 L809.1 218.3 L810.5 219.6 L812.0 220.6 L813.6 221.3 L815.1 221.5 L816.6 221.2 L818.3 220.4 L820.0 219.3 L821.6 217.9 L823.1 216.1 L824.4 214.1 L825.4 211.7 L826.3 208.9 L827.1 205.7 L827.7 202.4 L828.1 199.0 L828.4 195.6 L828.6 192.2 L828.7 188.6 L828.6 185.0 L828.3 181.4 L827.8 177.8 L827.0 174.4 L825.9 171.2 L824.6 168.1 L823.0 165.2 L821.1 162.2 L819.0 159.1 L816.5 155.9 L813.6 152.5 L810.2 149.0 L806.6 145.5 L802.8 141.9 L799.0 138.3 L795.3 134.7 L791.7 131.0 L788.0 127.1 L784.4 123.1 L780.8 119.4 L777.3 116.1 L774.1 113.5 L771.1 111.5 L768.4 110.0 L765.8 108.9 L763.3 108.2 L760.8 107.8 L758.2 107.7 L755.6 107.9 L753.0 108.4 L750.4 109.2 L747.8 110.3 L745.1 111.7 L742.3 113.5 L739.4 115.7 L736.4 118.2 L733.4 121.1 L730.3 124.2 L727.1 127.5 L723.8 130.7 L720.4 134.1 L716.7 137.9 L713.0 141.7 L709.4 145.5 L705.9 148.9 L702.6 151.9 L699.6 154.3 L696.8 156.3 L694.1 157.9 L691.6 159.5 L689.2 160.9 L686.8 162.5 L684.5 164.1 L682.3 165.6 L680.1 167.0 L678.2 168.5 L676.4 170.0 L674.8 171.8 L673.6 173.8 L672.7 176.0 L671.9 178.2 L671.3 180.6 L670.5 182.8 L669.6 185.0 L668.5 187.1 L667.2 189.3 L665.9 191.4 L664.6 193.5 L663.1 195.3 L661.6 196.9 L660.0 198.1 L658.2 199.0 L656.3 199.7 L654.4 200.4 L652.6 201.2 L651.0 202.2 L649.5 203.4 L647.9 204.7 L646.5 206.0 L645.1 207.6 L644.0 209.4 L643.1 211.5 L642.5 214.0 L642.0 216.8 L641.8 219.8 L641.7 223.1 L641.7 226.5 L641.8 230.0 L642.1 233.7 L642.6 237.8 L643.2 242.0 L643.8 246.2 L644.2 250.2 L644.4 253.8 L644.3 256.7 L643.9 259.1 L643.4 261.3 L642.8 263.6 L642.1 266.4 L641.4 270.0 L640.6 274.7 L639.6 280.1 L638.6 286.0 L637.5 292.2 L636.4 298.2 L635.4 303.9 L634.4 309.2 L633.4 314.4 L632.3 319.5 L631.3 324.6 L630.4 329.5 L629.5 334.5 L628.6 339.6 L627.8 344.9 L626.9 350.1 L626.2 355.0 L625.6 359.5 L625.3 363.3 L625.2 366.3 L625.3 368.6 L625.6 370.5 L626.0 372.1 L626.5 373.6 L627.0 375.2 L627.6 376.8 L628.2 378.4 L629.0 379.8 L629.8 381.2 L630.8 382.5 L632.0 383.7 L633.4 384.9 L635.1 386.1 L636.9 387.3 L638.7 388.3 L640.5 389.1 L642.2 389.6 L643.7 389.8 L645.1 389.7 L646.5 389.4 L647.8 389.0 L649.2 388.5 L650.7 387.9 L652.2 387.3 L653.7 386.5 L655.3 385.7 L656.9 384.8 L658.8 383.8 L660.9 382.8 L663.4 381.7 L666.2 380.6 L669.2 379.3 L672.2 378.1 L675.2 377.0 L677.9 376.0 L680.4 375.1 L682.7 374.3 L684.9 373.5 L687.1 372.9 L689.2 372.3 L691.4 371.8 L693.7 371.4 L696.0 371.1 L698.3 370.9 L700.5 370.7 L702.5 370.7 L704.2 370.8 L705.5 371.0 L706.5 371.2 L707.3 371.6 L708.0 372.1 L708.6 372.7 L709.3 373.5 L710.0 374.5 L710.7 375.7 L711.3 377.1 L711.9 378.5 L712.7 379.9 L713.5 381.1 L714.5 382.2 L715.5 383.4 L716.6 384.4 L717.8 385.4 L719.0 386.2 L720.3 386.8 L721.6 387.2 L722.9 387.5 L724.3 387.7 L725.8 387.6 L727.3 387.3 L728.8 386.8 L730.5 386.0 L732.3 385.0 L734.1 383.8 L735.9 382.3 L737.6 380.6 L739.0 378.6 L740.2 376.1 L741.2 373.2 L742.1 369.9 L742.9 366.7 L743.5 363.9 L744.0 361.6 L744.3 360.2 L744.5 359.4 L744.5 358.9 L744.5 358.4 L744.5 357.5 L744.5 356.0 L744.6 353.5 L744.7 350.2 L744.9 346.6 L745.0 343.1 L745.1 340.0 L745.2 337.9Z" fill="none" stroke="#b0b0b0" stroke-width="9" stroke-linejoin="round"/>
<path d="M744.5 356.0 L744.6 353.8 L744.7 351.2 L744.9 348.2 L745.0 344.9 L745.1 341.5 L745.2 337.9 L745.2 333.9 L745.2 329.5 L745.2 324.9 L745.2 320.4 L745.2 316.1 L745.2 312.4 L745.3 309.3 L745.4 306.7 L745.6 304.3 L745.7 302.1 L745.7 300.1 L745.7 298.0 L745.5 295.9 L745.3 293.8 L745.0 291.9 L744.6 290.0 L744.3 288.4 L744.0 287.0 L743.8 285.9 L743.6 285.2 L743.4 284.6 L743.1 284.2 L742.8 283.6 L742.3 282.9 L741.7 282.0 L740.9 281.0 L740.0 279.9 L739.0 278.8 L738.1 277.7 L737.2 276.8 L736.4 276.0 L735.8 275.4 L735.2 274.8 L734.4 274.2 L733.3 273.4 L731.8 272.3 L729.7 271.0 L727.0 269.4 L724.0 267.8 L721.0 265.9 L718.2 263.9 L715.9 261.8 L714.0 259.5 L712.4 257.0 L711.1 254.4 L709.9 251.6 L708.8 248.8 L707.9 245.9 L707.2 242.8 L706.7 239.5 L706.4 236.1 L706.2 232.8 L705.8 229.8 L705.3 227.3 L704.6 225.3 L703.8 223.6 L703.0 222.2 L702.1 221.1 L701.1 220.1 L700.0 219.4 L698.8 218.9 L697.6 218.6 L696.3 218.5 L694.9 218.6 L693.5 218.9 L692.1 219.4 L690.6 220.2 L689.0 221.4 L687.4 222.8 L685.8 224.1 L684.2 225.3 L682.8 226.0 L681.5 226.4 L680.2 226.6 L679.0 226.6 L677.9 226.3 L677.0 225.7 L676.2 224.7 L675.6 223.2 L675.0 221.1 L674.7 218.8 L674.5 216.2 L674.5 213.8 L674.8 211.5 L675.4 209.4 L676.2 207.2 L677.2 205.1 L678.5 203.1 L679.9 201.3 L681.5 199.6 L683.1 198.1 L684.6 196.9 L686.4 195.7 L688.5 194.7 L691.2 193.8 L694.7 192.9 L699.1 192.1 L704.4 191.4 L710.2 190.8 L716.5 190.2 L722.8 189.6 L729.1 189.0 L735.6 188.3 L742.4 187.6 L749.4 186.9 L756.3 186.2 L762.9 185.5 L768.8 185.0 L774.1 184.5 L779.1 184.1 L783.7 183.7 L787.9 183.4 L791.8 183.2 L795.3 183.1 L798.4 183.1 L801.0 183.1 L803.3 183.3 L805.3 183.6 L807.0 184.1 L808.5 185.0 L809.8 186.3 L810.8 187.9 L811.6 189.8 L812.1 191.8 L812.4 193.8 L812.5 195.6 L812.3 197.2 L811.7 198.7 L810.8 200.2 L809.9 201.7 L809.1 203.2 L808.5 204.8 L808.0 206.5 L807.5 208.4 L807.1 210.3 L806.9 212.1 L806.9 213.9 L807.2 215.4 L808.0 216.8 L809.1 218.3 L810.5 219.6 L812.0 220.6 L813.6 221.3 L815.1 221.5 L816.6 221.2 L818.3 220.4 L820.0 219.3 L821.6 217.9 L823.1 216.1 L824.4 214.1 L825.4 211.7 L826.3 208.9 L827.1 205.7 L827.7 202.4 L828.1 199.0 L828.4 195.6 L828.6 192.2 L828.7 188.6 L828.6 185.0 L828.3 181.4 L827.8 177.8 L827.0 174.4 L825.9 171.2 L824.6 168.1 L823.0 165.2 L821.1 162.2 L819.0 159.1 L816.5 155.9 L813.6 152.5 L810.2 149.0 L806.6 145.5 L802.8 141.9 L799.0 138.3 L795.3 134.7 L791.7 131.0 L788.0 127.1 L784.4 123.1 L780.8 119.4 L777.3 116.1 L774.1 113.5 L771.1 111.5 L768.4 110.0 L765.8 108.9 L763.3 108.2 L760.8 107.8 L758.2 107.7 L755.6 107.9 L753.0 108.4 L750.4 109.2 L747.8 110.3 L745.1 111.7 L742.3 113.5 L739.4 115.7 L736.4 118.2 L733.4 121.1 L730.3 124.2 L727.1 127.5 L723.8 130.7 L720.4 134.1 L716.7 137.9 L713.0 141.7 L709.4 145.5 L705.9 148.9 L702.6 151.9 L699.6 154.3 L696.8 156.3 L694.1 157.9 L691.6 159.5 L689.2 160.9 L686.8 162.5 L684.5 164.1 L682.3 165.6 L680.1 167.0 L678.2 168.5 L676.4 170.0 L674.8 171.8 L673.6 173.8 L672.7 176.0 L671.9 178.2 L671.3 180.6 L670.5 182.8 L669.6 185.0 L668.5 187.1 L667.2 189.3 L665.9 191.4 L664.6 193.5 L663.1 195.3 L661.6 196.9 L660.0 198.1 L658.2 199.0 L656.3 199.7 L654.4 200.4 L652.6 201.2 L651.0 202.2 L649.5 203.4 L647.9 204.7 L646.5 206.0 L645.1 207.6 L644.0 209.4 L643.1 211.5 L642.5 214.0 L642.0 216.8 L641.8 219.8 L641.7 223.1 L641.7 226.5 L641.8 230.0 L642.1 233.7 L642.6 237.8 L643.2 242.0 L643.8 246.2 L644.2 250.2 L644.4 253.8 L644.3 256.7 L643.9 259.1 L643.4 261.3 L642.8 263.6 L642.1 266.4 L641.4 270.0 L640.6 274.7 L639.6 280.1 L638.6 286.0 L637.5 292.2 L636.4 298.2 L635.4 303.9 L634.4 309.2 L633.4 314.4 L632.3 319.5 L631.3 324.6 L630.4 329.5 L629.5 334.5 L628.6 339.6 L627.8 344.9 L626.9 350.1 L626.2 355.0 L625.6 359.5 L625.3 363.3 L625.2 366.3 L625.3 368.6 L625.6 370.5 L626.0 372.1 L626.5 373.6 L627.0 375.2 L627.6 376.8 L628.2 378.4 L629.0 379.8 L629.8 381.2 L630.8 382.5 L632.0 383.7 L633.4 384.9 L635.1 386.1 L636.9 387.3 L638.7 388.3 L640.5 389.1 L642.2 389.6 L643.7 389.8 L645.1 389.7 L646.5 389.4 L647.8 389.0 L649.2 388.5 L650.7 387.9 L652.2 387.3 L653.7 386.5 L655.3 385.7 L656.9 384.8 L658.8 383.8 L660.9 382.8 L663.4 381.7 L666.2 380.6 L669.2 379.3 L672.2 378.1 L675.2 377.0 L677.9 376.0 L680.4 375.1 L682.7 374.3 L684.9 373.5 L687.1 372.9 L689.2 372.3 L691.4 371.8 L693.7 371.4 L696.0 371.1 L698.3 370.9 L700.5 370.7 L702.5 370.7 L704.2 370.8 L705.5 371.0 L706.5 371.2 L707.3 371.6 L708.0 372.1 L708.6 372.7 L709.3 373.5 L710.0 374.5 L710.7 375.7 L711.3 377.1 L711.9 378.5 L712.7 379.9 L713.5 381.1 L714.5 382.2 L715.5 383.4 L716.6 384.4 L717.8 385.4 L719.0 386.2 L720.3 386.8 L721.6 387.2 L722.9 387.5 L724.3 387.7 L725.8 387.6 L727.3 387.3 L728.8 386.8 L730.5 386.0 L732.3 385.0 L734.1 383.8 L735.9 382.3 L737.6 380.6 L739.0 378.6 L740.2 376.1 L741.2 373.2 L742.1 369.9 L742.9 366.7 L743.5 363.9 L744.0 361.6 L744.3 360.2 L744.5 359.4 L744.5 358.9 L744.5 358.4 L744.5 357.5 L744.5 356.0 L744.6 353.5 L744.7 350.2 L744.9 346.6 L745.0 343.1 L745.1 340.0 L745.2 337.9Z" fill="none" stroke="#3c3c3c" stroke-width="6.2" stroke-linejoin="round"/>
<rect x="735.5" y="354.8" width="2.9" height="1.9" fill="#d8d8d8"/>
<rect x="735.5" y="356.7" width="2.9" height="1.9" fill="#9a9a9a"/>
<rect x="738.4" y="354.8" width="2.9" height="1.9" fill="#9a9a9a"/>
<rect x="738.4" y="356.7" width="2.9" height="1.9" fill="#d8d8d8"/>
<rect x="741.3" y="354.8" width="2.9" height="1.9" fill="#d8d8d8"/>
<rect x="741.3" y="356.7" width="2.9" height="1.9" fill="#9a9a9a"/>
<rect x="744.2" y="354.8" width="2.9" height="1.9" fill="#9a9a9a"/>
<rect x="744.2" y="356.7" width="2.9" height="1.9" fill="#d8d8d8"/>
<rect x="747.1" y="354.8" width="2.9" height="1.9" fill="#d8d8d8"/>
<rect x="747.1" y="356.7" width="2.9" height="1.9" fill="#9a9a9a"/>
<rect x="750.0" y="354.8" width="2.9" height="1.9" fill="#9a9a9a"/>
<rect x="750.0" y="356.7" width="2.9" height="1.9" fill="#d8d8d8"/>
<circle cx="745.2" cy="297.5" r="6.6" fill="none" stroke="#1e90ff" stroke-width="1.1"/><circle cx="745.2" cy="297.5" r="4" fill="#1e90ff"/>
<rect x="915" y="100" width="536" height="22" fill="#000"/>
<rect x="915.5" y="101.5" width="27.5" height="19.5" fill="#3f3f46"/>
<rect x="916.5" y="102.5" width="25.5" height="18" fill="#252526"/>
<rect x="943" y="103" width="33.5" height="17" fill="#3f3f46"/>
<rect x="944" y="104" width="32.5" height="16" fill="#2a2a2c"/>
<rect x="977.5" y="103" width="51.0" height="17" fill="#3f3f46"/>
<rect x="978.5" y="104" width="50.0" height="16" fill="#2a2a2c"/>
<rect x="1029.5" y="103" width="31.0" height="17" fill="#3f3f46"/>
<rect x="1030.5" y="104" width="30.0" height="16" fill="#2a2a2c"/>
<rect x="1061.5" y="103" width="47.5" height="17" fill="#3f3f46"/>
<rect x="1062.5" y="104" width="46.5" height="16" fill="#2a2a2c"/>
<text x="922.5" y="115" font-size="11.2" fill="#f1f1f1" textLength="13.2" lengthAdjust="spacingAndGlyphs">All</text>
<text x="947.5" y="115" font-size="11.2" fill="#f1f1f1" textLength="23.5" lengthAdjust="spacingAndGlyphs">High</text>
<text x="983.5" y="115" font-size="11.2" fill="#f1f1f1" textLength="40" lengthAdjust="spacingAndGlyphs">Medium</text>
<text x="1035.5" y="115" font-size="11.2" fill="#f1f1f1" textLength="20" lengthAdjust="spacingAndGlyphs">Low</text>
<text x="1067" y="115" font-size="11.2" fill="#f1f1f1" textLength="37" lengthAdjust="spacingAndGlyphs">Masked</text>
<rect x="1111" y="102" width="265" height="18.5" fill="#555558"/>
<rect x="1112" y="103" width="263" height="16.5" fill="#252526"/>
<text x="1115.5" y="115.2" font-size="11" fill="#8a8a8a" textLength="40" lengthAdjust="spacingAndGlyphs">Search...</text>
<rect x="1360" y="103" width="15" height="16.5" fill="#3a3a3e"/>
<path d="M1364.5 108.5l5 5M1369.5 108.5l-5 5" stroke="#3399ff" stroke-width="1.8"/>
<path d="M1433 105h13.5l-5.5 6v6.5l-2.5-1.5v-5z" fill="#a8a8a8"/>
<rect x="915" y="122" width="536" height="18.3" fill="#2b2b2d"/>
<rect x="1040" y="122.3" width="132" height="18" fill="#39393c"/>
<rect x="915" y="122.3" width="18" height="18" fill="#252526"/>
<rect x="934" y="122.3" width="105" height="18" fill="#252526"/>
<rect x="933" y="122.3" width="1" height="18" fill="#38383b"/>
<rect x="1039" y="122.3" width="1" height="18" fill="#38383b"/>
<rect x="1172" y="122.3" width="1" height="18" fill="#333336"/>
<text x="939.5" y="134.5" font-size="11.6" fill="#c8c8c8" textLength="52.5" lengthAdjust="spacingAndGlyphs">Timestamp</text>
<text x="1046" y="134.5" font-size="11.6" fill="#c8c8c8" textLength="29.5" lengthAdjust="spacingAndGlyphs">Group</text>
<text x="1177.5" y="134.5" font-size="11.6" fill="#c8c8c8" textLength="8.8" lengthAdjust="spacingAndGlyphs">Id</text>
<rect x="1435" y="123" width="16" height="273" fill="#2d2d30"/>
<svg x="915" y="140" width="520" height="240" viewBox="915 140 520 240" overflow="hidden">
<rect x="915" y="140.3" width="520" height="17.7" fill="#3399ff"/>
<circle cx="924.7" cy="149.60" r="3.5" fill="#0000ff"/>
<text x="936" y="153.8" font-size="11.2" fill="#f1f1f1" textLength="56" lengthAdjust="spacingAndGlyphs">14:03:37.625</text>
<text x="1042.5" y="153.8" font-size="11.2" fill="#f1f1f1" textLength="15.2" lengthAdjust="spacingAndGlyphs">FIA</text>
<text x="1174.5" y="153.8" font-size="11.2" fill="#f1f1f1" textLength="31.5" lengthAdjust="spacingAndGlyphs">E-8046</text>
<rect x="915" y="157.97" width="520" height="17.7" fill="#101010"/>
<circle cx="924.7" cy="167.27" r="3.5" fill="#0000ff"/>
<text x="936" y="171.47" font-size="11.2" fill="#f1f1f1" textLength="56" lengthAdjust="spacingAndGlyphs">14:04:49.984</text>
<text x="1042.5" y="171.47" font-size="11.2" fill="#f1f1f1" textLength="15.2" lengthAdjust="spacingAndGlyphs">FIA</text>
<text x="1174.5" y="171.47" font-size="11.2" fill="#f1f1f1" textLength="31.5" lengthAdjust="spacingAndGlyphs">E-80B3</text>
<rect x="915" y="175.64" width="520" height="17.7" fill="#1d1d1d"/>
<circle cx="924.7" cy="184.94" r="3.5" fill="#0000ff"/>
<text x="936" y="189.14" font-size="11.2" fill="#f1f1f1" textLength="56" lengthAdjust="spacingAndGlyphs">14:03:55.200</text>
<text x="1042.5" y="189.14" font-size="11.2" fill="#f1f1f1" textLength="15.2" lengthAdjust="spacingAndGlyphs">FIA</text>
<text x="1174.5" y="189.14" font-size="11.2" fill="#f1f1f1" textLength="31.5" lengthAdjust="spacingAndGlyphs">E-80B3</text>
<rect x="915" y="193.31" width="520" height="17.7" fill="#101010"/>
<circle cx="924.7" cy="202.61" r="3.5" fill="#0000ff"/>
<text x="936" y="206.81" font-size="11.2" fill="#f1f1f1" textLength="56" lengthAdjust="spacingAndGlyphs">14:03:50.660</text>
<text x="1042.5" y="206.81" font-size="11.2" fill="#f1f1f1" textLength="15.2" lengthAdjust="spacingAndGlyphs">FIA</text>
<text x="1174.5" y="206.81" font-size="11.2" fill="#f1f1f1" textLength="31.5" lengthAdjust="spacingAndGlyphs">E-80B3</text>
<rect x="915" y="210.98" width="520" height="17.7" fill="#1d1d1d"/>
<circle cx="924.7" cy="220.28" r="3.5" fill="#0000ff"/>
<text x="936" y="224.48" font-size="11.2" fill="#f1f1f1" textLength="56" lengthAdjust="spacingAndGlyphs">14:07:18.938</text>
<text x="1042.5" y="224.48" font-size="11.2" fill="#f1f1f1" textLength="15.2" lengthAdjust="spacingAndGlyphs">FIA</text>
<text x="1174.5" y="224.48" font-size="11.2" fill="#f1f1f1" textLength="31.5" lengthAdjust="spacingAndGlyphs">E-80B3</text>
<rect x="915" y="228.65" width="520" height="17.7" fill="#101010"/>
<circle cx="924.7" cy="237.95" r="3.5" fill="#0000ff"/>
<text x="936" y="242.15" font-size="11.2" fill="#f1f1f1" textLength="56" lengthAdjust="spacingAndGlyphs">14:06:40.324</text>
<text x="1042.5" y="242.15" font-size="11.2" fill="#f1f1f1" textLength="15.2" lengthAdjust="spacingAndGlyphs">FIA</text>
<text x="1174.5" y="242.15" font-size="11.2" fill="#f1f1f1" textLength="31.5" lengthAdjust="spacingAndGlyphs">E-80B3</text>
<rect x="915" y="246.32" width="520" height="17.7" fill="#1d1d1d"/>
<circle cx="924.7" cy="255.62" r="3.5" fill="#0000ff"/>
<text x="936" y="259.82" font-size="11.2" fill="#f1f1f1" textLength="56" lengthAdjust="spacingAndGlyphs">14:06:44.426</text>
<text x="1042.5" y="259.82" font-size="11.2" fill="#f1f1f1" textLength="15.2" lengthAdjust="spacingAndGlyphs">FIA</text>
<text x="1174.5" y="259.82" font-size="11.2" fill="#f1f1f1" textLength="31.5" lengthAdjust="spacingAndGlyphs">E-80B3</text>
<rect x="915" y="263.99" width="520" height="17.7" fill="#101010"/>
<circle cx="924.7" cy="273.29" r="3.5" fill="#0000ff"/>
<text x="936" y="277.49" font-size="11.2" fill="#f1f1f1" textLength="56" lengthAdjust="spacingAndGlyphs">14:05:07.605</text>
<text x="1042.5" y="277.49" font-size="11.2" fill="#f1f1f1" textLength="35" lengthAdjust="spacingAndGlyphs">Chassis</text>
<text x="1174.5" y="277.49" font-size="11.2" fill="#f1f1f1" textLength="31.5" lengthAdjust="spacingAndGlyphs">E-8615</text>
<rect x="915" y="281.66" width="520" height="17.7" fill="#1d1d1d"/>
<circle cx="924.7" cy="290.96" r="3.5" fill="#0000ff"/>
<text x="936" y="295.16" font-size="11.2" fill="#f1f1f1" textLength="56" lengthAdjust="spacingAndGlyphs">14:07:42.325</text>
<text x="1042.5" y="295.16" font-size="11.2" fill="#f1f1f1" textLength="35" lengthAdjust="spacingAndGlyphs">Chassis</text>
<text x="1174.5" y="295.16" font-size="11.2" fill="#f1f1f1" textLength="31.5" lengthAdjust="spacingAndGlyphs">E-8615</text>
<rect x="915" y="299.33" width="520" height="17.7" fill="#101010"/>
<circle cx="924.7" cy="308.63" r="3.5" fill="#0000ff"/>
<text x="936" y="312.83" font-size="11.2" fill="#f1f1f1" textLength="56" lengthAdjust="spacingAndGlyphs">14:06:02.765</text>
<text x="1042.5" y="312.83" font-size="11.2" fill="#f1f1f1" textLength="35" lengthAdjust="spacingAndGlyphs">Chassis</text>
<text x="1174.5" y="312.83" font-size="11.2" fill="#f1f1f1" textLength="31.5" lengthAdjust="spacingAndGlyphs">E-8615</text>
<rect x="915" y="317.0" width="520" height="17.7" fill="#1d1d1d"/>
<circle cx="924.7" cy="326.30" r="3.5" fill="#0000ff"/>
<text x="936" y="330.5" font-size="11.2" fill="#f1f1f1" textLength="56" lengthAdjust="spacingAndGlyphs">14:06:43.665</text>
<text x="1042.5" y="330.5" font-size="11.2" fill="#f1f1f1" textLength="35" lengthAdjust="spacingAndGlyphs">Chassis</text>
<text x="1174.5" y="330.5" font-size="11.2" fill="#f1f1f1" textLength="31.5" lengthAdjust="spacingAndGlyphs">E-8615</text>
<rect x="915" y="334.67" width="520" height="17.7" fill="#101010"/>
<circle cx="924.7" cy="343.97" r="3.5" fill="#0000ff"/>
<text x="936" y="348.17" font-size="11.2" fill="#f1f1f1" textLength="56" lengthAdjust="spacingAndGlyphs">14:04:09.825</text>
<text x="1042.5" y="348.17" font-size="11.2" fill="#f1f1f1" textLength="35" lengthAdjust="spacingAndGlyphs">Chassis</text>
<text x="1174.5" y="348.17" font-size="11.2" fill="#f1f1f1" textLength="31.5" lengthAdjust="spacingAndGlyphs">E-8615</text>
<rect x="915" y="352.34" width="520" height="17.7" fill="#1d1d1d"/>
<circle cx="924.7" cy="361.64" r="3.5" fill="#0000ff"/>
<text x="936" y="365.84" font-size="11.2" fill="#f1f1f1" textLength="56" lengthAdjust="spacingAndGlyphs">14:06:40.505</text>
<text x="1042.5" y="365.84" font-size="11.2" fill="#f1f1f1" textLength="35" lengthAdjust="spacingAndGlyphs">Chassis</text>
<text x="1174.5" y="365.84" font-size="11.2" fill="#f1f1f1" textLength="31.5" lengthAdjust="spacingAndGlyphs">E-8614</text>
<rect x="915" y="370.01" width="520" height="17.7" fill="#101010"/>
<circle cx="924.7" cy="379.31" r="3.5" fill="#0000ff"/>
<text x="936" y="383.51" font-size="11.2" fill="#f1f1f1" textLength="56" lengthAdjust="spacingAndGlyphs">14:06:09.165</text>
<text x="1042.5" y="383.51" font-size="11.2" fill="#f1f1f1" textLength="35" lengthAdjust="spacingAndGlyphs">Chassis</text>
<text x="1174.5" y="383.51" font-size="11.2" fill="#f1f1f1" textLength="31.5" lengthAdjust="spacingAndGlyphs">E-8618</text>
</svg>
<rect x="915" y="380" width="520" height="15.5" fill="#333337"/>
<rect x="916.5" y="381" width="13.5" height="13" fill="#3a3a3e"/>
<rect x="931" y="381" width="224" height="13" fill="#3e3e42"/>
<rect x="1421.5" y="381" width="12.5" height="13" fill="#3a3a3e"/>
<path d="M926 384.5v5.5l-4-2.75z" fill="#9a9a9a"/><path d="M1426 386v5.5l4-2.75z" fill="#9a9a9a"/>
<rect x="1040.5" y="385" width="0.9" height="6" fill="#7a7a7a"/>
<rect x="1042.5" y="385" width="0.9" height="6" fill="#7a7a7a"/>
<rect x="1044.5" y="385" width="0.9" height="6" fill="#7a7a7a"/>
<rect x="1046.5" y="385" width="0.9" height="6" fill="#7a7a7a"/>
<rect x="1436" y="381" width="12.5" height="13" fill="#3a3a3e"/>
<rect x="1436" y="141.5" width="12.5" height="13" fill="#3a3a3e"/>
<path d="M1439 386h8l-4 4z" fill="#a0a0a0"/><path d="M1439.5 151h7l-3.5-4z" fill="#9a9a9a"/>
<rect x="1436" y="343.8" width="12.5" height="5.7" fill="#3e3e42"/>
<rect x="585" y="677.08" width="325" height="1" fill="#174a7e"/>
<rect x="585" y="659.41" width="325" height="1" fill="#174a7e"/>
<rect x="585" y="641.74" width="325" height="1" fill="#174a7e"/>
<rect x="585" y="624.07" width="325" height="1" fill="#174a7e"/>
<rect x="585" y="606.4" width="325" height="1" fill="#174a7e"/>
<rect x="585" y="588.73" width="325" height="1" fill="#174a7e"/>
<rect x="585" y="571.06" width="325" height="1" fill="#174a7e"/>
<rect x="585" y="553.39" width="325" height="1" fill="#174a7e"/>
<rect x="585" y="535.72" width="325" height="1" fill="#174a7e"/>
<rect x="585" y="518.05" width="325" height="1" fill="#174a7e"/>
<rect x="585" y="500.38" width="325" height="1" fill="#174a7e"/>
<rect x="585" y="482.71" width="325" height="1" fill="#174a7e"/>
<rect x="585" y="465.04" width="325" height="1" fill="#174a7e"/>
<rect x="585" y="447.37" width="325" height="1" fill="#174a7e"/>
<rect x="585" y="429.7" width="325" height="1" fill="#174a7e"/>
<rect x="665.7" y="429" width="1" height="267" fill="#174a7e"/>
<rect x="746.9" y="429" width="1" height="267" fill="#174a7e"/>
<rect x="828.1" y="429" width="1" height="267" fill="#174a7e"/>
<rect x="584.5" y="694.75" width="2.5" height="1" fill="#c8c8c8"/>
<text x="582.5" y="697.45" font-size="6.4" fill="#cfcfcf" font-family="Liberation Mono" text-anchor="end" stroke="#cfcfcf" stroke-width="0.15">0.0</text>
<rect x="584.5" y="685.91" width="2.5" height="1" fill="#c8c8c8"/>
<text x="582.5" y="688.62" font-size="6.4" fill="#cfcfcf" font-family="Liberation Mono" text-anchor="end" stroke="#cfcfcf" stroke-width="0.15">200.0</text>
<rect x="584.5" y="677.08" width="2.5" height="1" fill="#c8c8c8"/>
<text x="582.5" y="679.78" font-size="6.4" fill="#cfcfcf" font-family="Liberation Mono" text-anchor="end" stroke="#cfcfcf" stroke-width="0.15">400.0</text>
<rect x="584.5" y="668.25" width="2.5" height="1" fill="#c8c8c8"/>
<text x="582.5" y="670.95" font-size="6.4" fill="#cfcfcf" font-family="Liberation Mono" text-anchor="end" stroke="#cfcfcf" stroke-width="0.15">600.0</text>
<rect x="584.5" y="659.41" width="2.5" height="1" fill="#c8c8c8"/>
<text x="582.5" y="662.11" font-size="6.4" fill="#cfcfcf" font-family="Liberation Mono" text-anchor="end" stroke="#cfcfcf" stroke-width="0.15">800.0</text>
<rect x="584.5" y="650.58" width="2.5" height="1" fill="#c8c8c8"/>
<text x="582.5" y="653.28" font-size="6.4" fill="#cfcfcf" font-family="Liberation Mono" text-anchor="end" stroke="#cfcfcf" stroke-width="0.15">1000.0</text>
<rect x="584.5" y="641.74" width="2.5" height="1" fill="#c8c8c8"/>
<text x="582.5" y="644.44" font-size="6.4" fill="#cfcfcf" font-family="Liberation Mono" text-anchor="end" stroke="#cfcfcf" stroke-width="0.15">1200.0</text>
<rect x="584.5" y="632.9" width="2.5" height="1" fill="#c8c8c8"/>
<text x="582.5" y="635.61" font-size="6.4" fill="#cfcfcf" font-family="Liberation Mono" text-anchor="end" stroke="#cfcfcf" stroke-width="0.15">1400.0</text>
<rect x="584.5" y="624.07" width="2.5" height="1" fill="#c8c8c8"/>
<text x="582.5" y="626.77" font-size="6.4" fill="#cfcfcf" font-family="Liberation Mono" text-anchor="end" stroke="#cfcfcf" stroke-width="0.15">1600.0</text>
<rect x="584.5" y="615.24" width="2.5" height="1" fill="#c8c8c8"/>
<text x="582.5" y="617.94" font-size="6.4" fill="#cfcfcf" font-family="Liberation Mono" text-anchor="end" stroke="#cfcfcf" stroke-width="0.15">1800.0</text>
<rect x="584.5" y="606.4" width="2.5" height="1" fill="#c8c8c8"/>
<text x="582.5" y="609.1" font-size="6.4" fill="#cfcfcf" font-family="Liberation Mono" text-anchor="end" stroke="#cfcfcf" stroke-width="0.15">2000.0</text>
<rect x="584.5" y="597.57" width="2.5" height="1" fill="#c8c8c8"/>
<text x="582.5" y="600.27" font-size="6.4" fill="#cfcfcf" font-family="Liberation Mono" text-anchor="end" stroke="#cfcfcf" stroke-width="0.15">2200.0</text>
<rect x="584.5" y="588.73" width="2.5" height="1" fill="#c8c8c8"/>
<text x="582.5" y="591.43" font-size="6.4" fill="#cfcfcf" font-family="Liberation Mono" text-anchor="end" stroke="#cfcfcf" stroke-width="0.15">2400.0</text>
<rect x="584.5" y="579.89" width="2.5" height="1" fill="#c8c8c8"/>
<text x="582.5" y="582.6" font-size="6.4" fill="#cfcfcf" font-family="Liberation Mono" text-anchor="end" stroke="#cfcfcf" stroke-width="0.15">2600.0</text>
<rect x="584.5" y="571.06" width="2.5" height="1" fill="#c8c8c8"/>
<text x="582.5" y="573.76" font-size="6.4" fill="#cfcfcf" font-family="Liberation Mono" text-anchor="end" stroke="#cfcfcf" stroke-width="0.15">2800.0</text>
<rect x="584.5" y="562.23" width="2.5" height="1" fill="#c8c8c8"/>
<text x="582.5" y="564.93" font-size="6.4" fill="#cfcfcf" font-family="Liberation Mono" text-anchor="end" stroke="#cfcfcf" stroke-width="0.15">3000.0</text>
<rect x="584.5" y="553.39" width="2.5" height="1" fill="#c8c8c8"/>
<text x="582.5" y="556.09" font-size="6.4" fill="#cfcfcf" font-family="Liberation Mono" text-anchor="end" stroke="#cfcfcf" stroke-width="0.15">3200.0</text>
<rect x="584.5" y="544.55" width="2.5" height="1" fill="#c8c8c8"/>
<text x="582.5" y="547.25" font-size="6.4" fill="#cfcfcf" font-family="Liberation Mono" text-anchor="end" stroke="#cfcfcf" stroke-width="0.15">3400.0</text>
<rect x="584.5" y="535.72" width="2.5" height="1" fill="#c8c8c8"/>
<text x="582.5" y="538.42" font-size="6.4" fill="#cfcfcf" font-family="Liberation Mono" text-anchor="end" stroke="#cfcfcf" stroke-width="0.15">3600.0</text>
<rect x="584.5" y="526.88" width="2.5" height="1" fill="#c8c8c8"/>
<text x="582.5" y="529.59" font-size="6.4" fill="#cfcfcf" font-family="Liberation Mono" text-anchor="end" stroke="#cfcfcf" stroke-width="0.15">3800.0</text>
<rect x="584.5" y="518.05" width="2.5" height="1" fill="#c8c8c8"/>
<text x="582.5" y="520.75" font-size="6.4" fill="#cfcfcf" font-family="Liberation Mono" text-anchor="end" stroke="#cfcfcf" stroke-width="0.15">4000.0</text>
<rect x="584.5" y="509.21" width="2.5" height="1" fill="#c8c8c8"/>
<text x="582.5" y="511.91" font-size="6.4" fill="#cfcfcf" font-family="Liberation Mono" text-anchor="end" stroke="#cfcfcf" stroke-width="0.15">4200.0</text>
<rect x="584.5" y="500.38" width="2.5" height="1" fill="#c8c8c8"/>
<text x="582.5" y="503.08" font-size="6.4" fill="#cfcfcf" font-family="Liberation Mono" text-anchor="end" stroke="#cfcfcf" stroke-width="0.15">4400.0</text>
<rect x="584.5" y="491.54" width="2.5" height="1" fill="#c8c8c8"/>
<text x="582.5" y="494.24" font-size="6.4" fill="#cfcfcf" font-family="Liberation Mono" text-anchor="end" stroke="#cfcfcf" stroke-width="0.15">4600.0</text>
<rect x="584.5" y="482.71" width="2.5" height="1" fill="#c8c8c8"/>
<text x="582.5" y="485.41" font-size="6.4" fill="#cfcfcf" font-family="Liberation Mono" text-anchor="end" stroke="#cfcfcf" stroke-width="0.15">4800.0</text>
<rect x="584.5" y="473.88" width="2.5" height="1" fill="#c8c8c8"/>
<text x="582.5" y="476.57" font-size="6.4" fill="#cfcfcf" font-family="Liberation Mono" text-anchor="end" stroke="#cfcfcf" stroke-width="0.15">5000.0</text>
<rect x="584.5" y="465.04" width="2.5" height="1" fill="#c8c8c8"/>
<text x="582.5" y="467.74" font-size="6.4" fill="#cfcfcf" font-family="Liberation Mono" text-anchor="end" stroke="#cfcfcf" stroke-width="0.15">5200.0</text>
<rect x="584.5" y="456.2" width="2.5" height="1" fill="#c8c8c8"/>
<text x="582.5" y="458.9" font-size="6.4" fill="#cfcfcf" font-family="Liberation Mono" text-anchor="end" stroke="#cfcfcf" stroke-width="0.15">5400.0</text>
<rect x="584.5" y="447.37" width="2.5" height="1" fill="#c8c8c8"/>
<text x="582.5" y="450.07" font-size="6.4" fill="#cfcfcf" font-family="Liberation Mono" text-anchor="end" stroke="#cfcfcf" stroke-width="0.15">5600.0</text>
<rect x="584.5" y="438.53" width="2.5" height="1" fill="#c8c8c8"/>
<text x="582.5" y="441.23" font-size="6.4" fill="#cfcfcf" font-family="Liberation Mono" text-anchor="end" stroke="#cfcfcf" stroke-width="0.15">5800.0</text>
<rect x="584.5" y="429.7" width="2.5" height="1" fill="#c8c8c8"/>
<text x="582.5" y="432.4" font-size="6.4" fill="#cfcfcf" font-family="Liberation Mono" text-anchor="end" stroke="#cfcfcf" stroke-width="0.15">6000.0</text>
<rect x="584.5" y="693" width="1" height="2.5" fill="#c8c8c8"/>
<rect x="625.1" y="693" width="1" height="2.5" fill="#c8c8c8"/>
<rect x="665.7" y="693" width="1" height="2.5" fill="#c8c8c8"/>
<rect x="706.3" y="693" width="1" height="2.5" fill="#c8c8c8"/>
<rect x="746.9" y="693" width="1" height="2.5" fill="#c8c8c8"/>
<rect x="787.5" y="693" width="1" height="2.5" fill="#c8c8c8"/>
<rect x="828.1" y="693" width="1" height="2.5" fill="#c8c8c8"/>
<rect x="868.7" y="693" width="1" height="2.5" fill="#c8c8c8"/>
<rect x="909.3" y="693" width="1" height="2.5" fill="#c8c8c8"/>
<svg x="545" y="696" width="365" height="10" viewBox="545 696 365 10" overflow="hidden">
<text x="585.0" y="702.2" font-size="6.4" fill="#c0c8d8" font-family="Liberation Mono" text-anchor="middle" stroke="#c0c8d8" stroke-width="0.15">0.0</text>
<text x="625.6" y="702.2" font-size="6.4" fill="#c0c8d8" font-family="Liberation Mono" text-anchor="middle" stroke="#c0c8d8" stroke-width="0.15">50.0</text>
<text x="666.2" y="702.2" font-size="6.4" fill="#c0c8d8" font-family="Liberation Mono" text-anchor="middle" stroke="#c0c8d8" stroke-width="0.15">100.0</text>
<text x="706.8" y="702.2" font-size="6.4" fill="#c0c8d8" font-family="Liberation Mono" text-anchor="middle" stroke="#c0c8d8" stroke-width="0.15">150.0</text>
<text x="747.4" y="702.2" font-size="6.4" fill="#c0c8d8" font-family="Liberation Mono" text-anchor="middle" stroke="#c0c8d8" stroke-width="0.15">200.0</text>
<text x="788.0" y="702.2" font-size="6.4" fill="#c0c8d8" font-family="Liberation Mono" text-anchor="middle" stroke="#c0c8d8" stroke-width="0.15">250.0</text>
<text x="828.6" y="702.2" font-size="6.4" fill="#c0c8d8" font-family="Liberation Mono" text-anchor="middle" stroke="#c0c8d8" stroke-width="0.15">300.0</text>
<text x="869.2" y="702.2" font-size="6.4" fill="#c0c8d8" font-family="Liberation Mono" text-anchor="middle" stroke="#c0c8d8" stroke-width="0.15">350.0</text>
<text x="909.8" y="702.2" font-size="6.4" fill="#c0c8d8" font-family="Liberation Mono" text-anchor="middle" stroke="#c0c8d8" stroke-width="0.15">400.0</text>
</svg>
<rect x="584" y="429" width="326" height="1.3" fill="#e8e8e8"/>
<rect x="584" y="429" width="1.2" height="267" fill="#d8d8d8"/>
<rect x="584" y="695" width="326" height="1.6" fill="#f0f0f0"/>
<rect x="908.6" y="429" width="1.2" height="267" fill="#d0d0d0"/>
<rect x="632" y="429" width="1" height="266" fill="#e0e0e0"/>
<rect x="585" y="680" width="325" height="1" fill="#e0e0e0"/>
<svg x="585" y="430" width="324" height="265" viewBox="585 430 324 265" overflow="hidden">
<path d="M585.4 683.6 L588.3 683.5 L592.3 683.4 L597.1 683.3 L602.1 683.1 L606.8 682.8 L611.5 682.4 L616.5 682.0 L621.5 681.4 L626.1 680.9 L630.0 680.4 L632.7 679.9 L634.4 679.5 L635.8 679.0 L637.7 678.5 L640.8 677.9 L645.3 677.2 L650.6 676.4 L656.6 675.5 L662.9 674.7 L669.4 673.8 L676.1 672.9 L683.2 672.1 L690.5 671.2 L697.8 670.3 L705.1 669.4 L712.5 668.5 L720.2 667.5 L727.8 666.5 L734.8 665.7 L740.8 664.9 L745.6 664.3 L749.6 663.8 L752.9 663.3 L755.9 662.9 L758.7 662.6 L761.8 662.3 L765.0 662.1 L767.6 662.0 L769.3 661.8 L769.4 661.7" fill="none" stroke="#2f90f5" stroke-width="4.8" stroke-linejoin="round" stroke-linecap="round"/>
<path d="M647.9 648.8 L648.9 648.2 L650.8 647.9 L653.4 647.7 L656.7 647.4 L660.4 647.0 L664.7 646.4 L669.7 645.7 L675.1 645.0 L681.0 644.2 L687.2 643.4 L693.8 642.6 L700.9 641.7 L708.3 640.9 L715.7 640.0 L723.0 639.0 L730.1 638.0 L737.3 637.0 L744.4 636.0 L751.6 634.9 L758.7 633.6 L766.1 632.2 L773.8 630.6 L781.4 629.0 L788.4 627.3 L794.4 625.6 L799.7 623.7 L804.6 621.7 L808.6 619.7 L811.3 617.9 L812.3 616.6" fill="none" stroke="#2f90f5" stroke-width="4.8" stroke-linejoin="round" stroke-linecap="round"/>
<path d="M653.3 598.8 L654.7 597.9 L657.1 597.0 L660.4 596.0 L664.6 595.1 L669.4 594.3 L675.3 593.5 L682.3 592.8 L689.9 592.1 L697.6 591.4 L705.1 590.7 L712.2 590.0 L719.4 589.3 L726.5 588.7 L733.7 587.9 L740.8 587.1 L748.3 586.2 L756.1 585.1 L763.7 584.0 L770.7 582.9 L776.6 581.8 L781.1 580.7 L784.4 579.5 L787.1 578.3 L789.5 577.1 L792.0 575.9 L794.8 574.7 L797.5 573.4 L800.1 572.1 L802.1 571.0 L803.3 570.2" fill="none" stroke="#2f90f5" stroke-width="4.8" stroke-linejoin="round" stroke-linecap="round"/>
<path d="M715.0 558.8 L715.5 558.1 L717.1 557.4 L719.5 556.6 L722.4 555.8 L725.5 555.0 L729.0 554.1 L733.0 553.1 L737.4 552.1 L741.9 551.1 L746.4 550.2 L750.9 549.4 L755.6 548.6 L760.3 547.8 L764.9 547.1 L769.2 546.4 L773.8 545.8 L778.7 545.3 L783.2 544.7 L786.6 544.2 L788.1 543.6" fill="none" stroke="#2f90f5" stroke-width="4.8" stroke-linejoin="round" stroke-linecap="round"/>
<path d="M695.0 519.8 L694.5 519.2 L694.3 518.6 L694.5 518.0 L695.4 517.5 L697.0 517.0 L699.4 516.6 L702.5 516.3 L706.2 516.0 L710.7 515.7 L716.0 515.1 L722.4 514.4 L729.8 513.5 L737.9 512.6 L746.1 511.5 L754.0 510.3 L761.8 509.0 L769.9 507.5 L777.9 505.9 L785.4 504.3 L792.0 502.7 L797.7 501.2 L802.8 499.7 L807.2 498.1 L811.2 496.6 L814.7 495.1 L817.9 493.5 L820.6 491.8 L822.8 490.1 L824.4 488.7 L825.2 487.5" fill="none" stroke="#2f90f5" stroke-width="4.8" stroke-linejoin="round" stroke-linecap="round"/>
<path d="M769.4 661.7 L767.5 661.6 L764.1 661.5 L759.6 661.5 L754.7 661.4 L749.8 661.3 L744.9 661.2 L739.6 661.0 L734.1 660.8 L728.5 660.6 L723.0 660.4" fill="none" stroke="#2f90f5" stroke-width="2.2" stroke-linejoin="round" stroke-linecap="round"/>
<path d="M723.0 660.4 L717.6 660.1 L712.3 659.7 L706.9 659.4 L701.6 659.0 L696.2 658.6 L690.6 658.3 L684.9 657.9 L679.2 657.6 L674.0 657.2 L669.4 656.8 L665.6 656.4 L662.4 656.0 L659.6 655.5 L657.2 654.9 L655.0 654.2 L652.8 653.2 L650.7 652.1 L649.0 650.8 L647.9 649.7 L647.9 648.8" fill="none" stroke="#2f90f5" stroke-width="4.4" stroke-linejoin="round" stroke-linecap="round"/>
<path d="M812.3 616.6 L811.3 615.9 L808.6 615.7 L804.6 615.7 L799.7 615.8 L794.4 615.7 L788.3 615.5 L781.0 615.3 L773.2 615.2 L765.6 615.0 L758.7 614.8 L752.8 614.6 L747.3 614.5 L742.2 614.3" fill="none" stroke="#2f90f5" stroke-width="2.2" stroke-linejoin="round" stroke-linecap="round"/>
<path d="M737.1 614.2 L731.9 614.0 L726.5 613.9 L721.2 613.8 L715.8 613.7 L710.5 613.5 L705.1 613.1 L699.6 612.4 L694.0 611.6 L688.4 610.6 L683.1 609.6 L678.3 608.6 L674.0 607.6 L670.0 606.5 L666.4 605.3 L663.1 604.2 L660.4 603.2 L657.9 602.3 L655.7 601.4 L654.0 600.5 L653.1 599.7 L653.3 598.8" fill="none" stroke="#2f90f5" stroke-width="4.4" stroke-linejoin="round" stroke-linecap="round"/>
<path d="M803.3 570.2 L803.8 569.7 L803.8 569.5 L803.1 569.4 L801.7 569.4 L799.5 569.2 L796.2 568.9 L791.8 568.5 L786.8 568.2 L781.6 567.8 L776.8 567.3 L772.3 566.8 L767.9 566.2 L763.4 565.7" fill="none" stroke="#2f90f5" stroke-width="2.2" stroke-linejoin="round" stroke-linecap="round"/>
<path d="M763.4 565.7 L758.8 565.1 L754.0 564.5 L748.7 563.9 L743.0 563.3 L737.2 562.8 L731.9 562.2 L727.4 561.6 L723.6 561.0 L720.3 560.5 L717.6 560.0 L715.8 559.4 L715.0 558.8" fill="none" stroke="#2f90f5" stroke-width="4.4" stroke-linejoin="round" stroke-linecap="round"/>
<path d="M788.1 543.6 L787.4 542.9 L785.1 542.2 L781.5 541.4 L777.3 540.6 L773.0 539.8 L768.4 538.9 L763.2 537.9 L757.6 537.0 L751.9 536.0 L746.4 535.0 L740.9 534.1 L735.3 533.2 L729.8 532.3 L724.5 531.4 L719.8 530.3 L715.6 529.0 L711.8 527.6 L708.4 526.2 L705.4 524.8 L702.7 523.6 L700.4 522.6 L698.5 521.8 L696.9 521.1 L695.8 520.4 L695.0 519.8" fill="none" stroke="#2f90f5" stroke-width="4.4" stroke-linejoin="round" stroke-linecap="round"/>
<path d="M825.2 487.5 L825.2 486.7 L824.4 486.3 L823.0 486.0 L821.0 485.9 L818.5 485.6 L815.3 485.3 L811.3 485.0 L806.9 484.8 L802.2 484.5 L797.6 484.3 L792.9 484.1 L788.1 483.8 L783.2 483.6 L778.1 483.4 L773.0 483.2 L767.7 483.0 L762.2 482.9 L756.7 482.8" fill="none" stroke="#2f90f5" stroke-width="2.2" stroke-linejoin="round" stroke-linecap="round"/>
<path d="M751.4 482.7 L746.4 482.4 L741.8 482.0 L737.4 481.5 L733.2 481.0 L729.3 480.4 L725.5 479.9 L721.7 479.3 L717.9 478.7 L714.4 478.0 L711.4 477.5 L709.3 477.1" fill="none" stroke="#2f90f5" stroke-width="4.4" stroke-linejoin="round" stroke-linecap="round"/>
<ellipse cx="668" cy="602.5" rx="9" ry="3" fill="#2f90f5"/><ellipse cx="662" cy="652.5" rx="10" ry="3.5" fill="#2f90f5"/><ellipse cx="641" cy="677" rx="6" ry="2.2" fill="#2f90f5"/>
<rect x="722.3" y="657.8" width="1.4" height="5.2" fill="#2f90f5"/>
<rect x="721.2" y="659.1" width="3.6" height="2.6" fill="#2f90f5"/>
<rect x="726.9" y="657.93" width="1.4" height="5.2" fill="#2f90f5"/>
<rect x="725.8" y="659.23" width="3.6" height="2.6" fill="#2f90f5"/>
<rect x="731.5" y="658.06" width="1.4" height="5.2" fill="#2f90f5"/>
<rect x="730.4" y="659.36" width="3.6" height="2.6" fill="#2f90f5"/>
<rect x="736.1" y="658.19" width="1.4" height="5.2" fill="#2f90f5"/>
<rect x="735.0" y="659.49" width="3.6" height="2.6" fill="#2f90f5"/>
<rect x="740.7" y="658.32" width="1.4" height="5.2" fill="#2f90f5"/>
<rect x="739.6" y="659.62" width="3.6" height="2.6" fill="#2f90f5"/>
<rect x="745.3" y="658.45" width="1.4" height="5.2" fill="#2f90f5"/>
<rect x="744.2" y="659.75" width="3.6" height="2.6" fill="#2f90f5"/>
<rect x="749.9" y="658.58" width="1.4" height="5.2" fill="#2f90f5"/>
<rect x="748.8" y="659.88" width="3.6" height="2.6" fill="#2f90f5"/>
<rect x="754.5" y="658.71" width="1.4" height="5.2" fill="#2f90f5"/>
<rect x="753.4" y="660.01" width="3.6" height="2.6" fill="#2f90f5"/>
<rect x="759.1" y="658.84" width="1.4" height="5.2" fill="#2f90f5"/>
<rect x="758.0" y="660.14" width="3.6" height="2.6" fill="#2f90f5"/>
<rect x="763.7" y="658.97" width="1.4" height="5.2" fill="#2f90f5"/>
<rect x="762.6" y="660.27" width="3.6" height="2.6" fill="#2f90f5"/>
<rect x="768.3" y="659.1" width="1.4" height="5.2" fill="#2f90f5"/>
<rect x="767.2" y="660.4" width="3.6" height="2.6" fill="#2f90f5"/>
<rect x="739.3" y="611.6" width="1.4" height="5.2" fill="#2f90f5"/>
<rect x="738.2" y="612.9" width="3.6" height="2.6" fill="#2f90f5"/>
<rect x="743.54" y="611.74" width="1.4" height="5.2" fill="#2f90f5"/>
<rect x="742.44" y="613.04" width="3.6" height="2.6" fill="#2f90f5"/>
<rect x="747.77" y="611.88" width="1.4" height="5.2" fill="#2f90f5"/>
<rect x="746.67" y="613.18" width="3.6" height="2.6" fill="#2f90f5"/>
<rect x="752.01" y="612.02" width="1.4" height="5.2" fill="#2f90f5"/>
<rect x="750.91" y="613.32" width="3.6" height="2.6" fill="#2f90f5"/>
<rect x="756.24" y="612.16" width="1.4" height="5.2" fill="#2f90f5"/>
<rect x="755.14" y="613.46" width="3.6" height="2.6" fill="#2f90f5"/>
<rect x="760.48" y="612.31" width="1.4" height="5.2" fill="#2f90f5"/>
<rect x="759.38" y="613.61" width="3.6" height="2.6" fill="#2f90f5"/>
<rect x="764.71" y="612.45" width="1.4" height="5.2" fill="#2f90f5"/>
<rect x="763.61" y="613.75" width="3.6" height="2.6" fill="#2f90f5"/>
<rect x="768.95" y="612.59" width="1.4" height="5.2" fill="#2f90f5"/>
<rect x="767.85" y="613.89" width="3.6" height="2.6" fill="#2f90f5"/>
<rect x="773.18" y="612.73" width="1.4" height="5.2" fill="#2f90f5"/>
<rect x="772.08" y="614.03" width="3.6" height="2.6" fill="#2f90f5"/>
<rect x="777.42" y="612.87" width="1.4" height="5.2" fill="#2f90f5"/>
<rect x="776.32" y="614.17" width="3.6" height="2.6" fill="#2f90f5"/>
<rect x="781.65" y="613.01" width="1.4" height="5.2" fill="#2f90f5"/>
<rect x="780.55" y="614.31" width="3.6" height="2.6" fill="#2f90f5"/>
<rect x="785.89" y="613.15" width="1.4" height="5.2" fill="#2f90f5"/>
<rect x="784.79" y="614.45" width="3.6" height="2.6" fill="#2f90f5"/>
<rect x="790.12" y="613.29" width="1.4" height="5.2" fill="#2f90f5"/>
<rect x="789.02" y="614.59" width="3.6" height="2.6" fill="#2f90f5"/>
<rect x="794.36" y="613.44" width="1.4" height="5.2" fill="#2f90f5"/>
<rect x="793.26" y="614.74" width="3.6" height="2.6" fill="#2f90f5"/>
<rect x="798.59" y="613.58" width="1.4" height="5.2" fill="#2f90f5"/>
<rect x="797.49" y="614.88" width="3.6" height="2.6" fill="#2f90f5"/>
<rect x="802.83" y="613.72" width="1.4" height="5.2" fill="#2f90f5"/>
<rect x="801.73" y="615.02" width="3.6" height="2.6" fill="#2f90f5"/>
<rect x="807.06" y="613.86" width="1.4" height="5.2" fill="#2f90f5"/>
<rect x="805.96" y="615.16" width="3.6" height="2.6" fill="#2f90f5"/>
<rect x="811.3" y="614.0" width="1.4" height="5.2" fill="#2f90f5"/>
<rect x="810.2" y="615.3" width="3.6" height="2.6" fill="#2f90f5"/>
<rect x="762.3" y="564.9" width="1.4" height="5.2" fill="#2f90f5"/>
<rect x="761.2" y="566.2" width="3.6" height="2.6" fill="#2f90f5"/>
<rect x="766.74" y="565.2" width="1.4" height="5.2" fill="#2f90f5"/>
<rect x="765.64" y="566.5" width="3.6" height="2.6" fill="#2f90f5"/>
<rect x="771.19" y="565.5" width="1.4" height="5.2" fill="#2f90f5"/>
<rect x="770.09" y="566.8" width="3.6" height="2.6" fill="#2f90f5"/>
<rect x="775.63" y="565.8" width="1.4" height="5.2" fill="#2f90f5"/>
<rect x="774.53" y="567.1" width="3.6" height="2.6" fill="#2f90f5"/>
<rect x="780.08" y="566.1" width="1.4" height="5.2" fill="#2f90f5"/>
<rect x="778.98" y="567.4" width="3.6" height="2.6" fill="#2f90f5"/>
<rect x="784.52" y="566.4" width="1.4" height="5.2" fill="#2f90f5"/>
<rect x="783.42" y="567.7" width="3.6" height="2.6" fill="#2f90f5"/>
<rect x="788.97" y="566.7" width="1.4" height="5.2" fill="#2f90f5"/>
<rect x="787.87" y="568.0" width="3.6" height="2.6" fill="#2f90f5"/>
<rect x="793.41" y="567.0" width="1.4" height="5.2" fill="#2f90f5"/>
<rect x="792.31" y="568.3" width="3.6" height="2.6" fill="#2f90f5"/>
<rect x="797.86" y="567.3" width="1.4" height="5.2" fill="#2f90f5"/>
<rect x="796.76" y="568.6" width="3.6" height="2.6" fill="#2f90f5"/>
<rect x="802.3" y="567.6" width="1.4" height="5.2" fill="#2f90f5"/>
<rect x="801.2" y="568.9" width="3.6" height="2.6" fill="#2f90f5"/>
<rect x="753.3" y="480.0" width="1.4" height="5.2" fill="#2f90f5"/>
<rect x="752.2" y="481.3" width="3.6" height="2.6" fill="#2f90f5"/>
<rect x="757.57" y="480.2" width="1.4" height="5.2" fill="#2f90f5"/>
<rect x="756.47" y="481.5" width="3.6" height="2.6" fill="#2f90f5"/>
<rect x="761.83" y="480.4" width="1.4" height="5.2" fill="#2f90f5"/>
<rect x="760.73" y="481.7" width="3.6" height="2.6" fill="#2f90f5"/>
<rect x="766.1" y="480.6" width="1.4" height="5.2" fill="#2f90f5"/>
<rect x="765.0" y="481.9" width="3.6" height="2.6" fill="#2f90f5"/>
<rect x="770.37" y="480.8" width="1.4" height="5.2" fill="#2f90f5"/>
<rect x="769.27" y="482.1" width="3.6" height="2.6" fill="#2f90f5"/>
<rect x="774.63" y="481.0" width="1.4" height="5.2" fill="#2f90f5"/>
<rect x="773.53" y="482.3" width="3.6" height="2.6" fill="#2f90f5"/>
<rect x="778.9" y="481.2" width="1.4" height="5.2" fill="#2f90f5"/>
<rect x="777.8" y="482.5" width="3.6" height="2.6" fill="#2f90f5"/>
<rect x="783.17" y="481.4" width="1.4" height="5.2" fill="#2f90f5"/>
<rect x="782.07" y="482.7" width="3.6" height="2.6" fill="#2f90f5"/>
<rect x="787.43" y="481.6" width="1.4" height="5.2" fill="#2f90f5"/>
<rect x="786.33" y="482.9" width="3.6" height="2.6" fill="#2f90f5"/>
<rect x="791.7" y="481.8" width="1.4" height="5.2" fill="#2f90f5"/>
<rect x="790.6" y="483.1" width="3.6" height="2.6" fill="#2f90f5"/>
<rect x="795.97" y="482.0" width="1.4" height="5.2" fill="#2f90f5"/>
<rect x="794.87" y="483.3" width="3.6" height="2.6" fill="#2f90f5"/>
<rect x="800.23" y="482.2" width="1.4" height="5.2" fill="#2f90f5"/>
<rect x="799.13" y="483.5" width="3.6" height="2.6" fill="#2f90f5"/>
<rect x="804.5" y="482.4" width="1.4" height="5.2" fill="#2f90f5"/>
<rect x="803.4" y="483.7" width="3.6" height="2.6" fill="#2f90f5"/>
<rect x="808.77" y="482.6" width="1.4" height="5.2" fill="#2f90f5"/>
<rect x="807.67" y="483.9" width="3.6" height="2.6" fill="#2f90f5"/>
<rect x="813.03" y="482.8" width="1.4" height="5.2" fill="#2f90f5"/>
<rect x="811.93" y="484.1" width="3.6" height="2.6" fill="#2f90f5"/>
<rect x="817.3" y="483.0" width="1.4" height="5.2" fill="#2f90f5"/>
<rect x="816.2" y="484.3" width="3.6" height="2.6" fill="#2f90f5"/>
</svg>
<text transform="translate(554.5,580) rotate(-90)" font-family="Liberation Mono" font-size="6.2" fill="#1e78d8" textLength="48" lengthAdjust="spacingAndGlyphs">sLap(335.2m)</text>
<rect x="549.5" y="583.5" width="4.5" height="4.5" fill="#1e90ff"/>
<rect x="718.5" y="706" width="4.5" height="4.5" fill="#1e90ff"/>
<text x="727.5" y="711.5" font-size="6.4" fill="#2a88e8" font-family="Liberation Mono" textLength="54" lengthAdjust="spacingAndGlyphs">vCar( 59.8kph)</text>
<rect x="954.5" y="675.5" width="495.5" height="1" fill="#2e2e2e"/>
<rect x="954.5" y="622.05" width="495.5" height="1" fill="#2e2e2e"/>
<rect x="954.5" y="568.6" width="495.5" height="1" fill="#2e2e2e"/>
<rect x="954.5" y="515.15" width="495.5" height="1" fill="#2e2e2e"/>
<rect x="954.5" y="461.7" width="495.5" height="1" fill="#2e2e2e"/>
<rect x="1003.12" y="420" width="1" height="256" fill="#2e2e2e"/>
<rect x="1052.74" y="420" width="1" height="256" fill="#2e2e2e"/>
<rect x="1102.36" y="420" width="1" height="256" fill="#2e2e2e"/>
<rect x="1151.98" y="420" width="1" height="256" fill="#2e2e2e"/>
<rect x="1201.6" y="420" width="1" height="256" fill="#2e2e2e"/>
<rect x="1251.22" y="420" width="1" height="256" fill="#2e2e2e"/>
<rect x="1300.84" y="420" width="1" height="256" fill="#2e2e2e"/>
<rect x="1350.46" y="420" width="1" height="256" fill="#2e2e2e"/>
<rect x="1400.08" y="420" width="1" height="256" fill="#2e2e2e"/>
<rect x="1449.7" y="420" width="1" height="256" fill="#2e2e2e"/>
<rect x="954" y="420" width="1" height="256" fill="#5a5a5a"/>
<rect x="947.5" y="675.5" width="7" height="1" fill="#6a6a6a"/>
<rect x="950" y="664.81" width="4.5" height="1" fill="#6a6a6a"/>
<rect x="950" y="654.12" width="4.5" height="1" fill="#6a6a6a"/>
<rect x="950" y="643.43" width="4.5" height="1" fill="#6a6a6a"/>
<rect x="950" y="632.74" width="4.5" height="1" fill="#6a6a6a"/>
<rect x="947.5" y="622.05" width="7" height="1" fill="#6a6a6a"/>
<rect x="950" y="611.36" width="4.5" height="1" fill="#6a6a6a"/>
<rect x="950" y="600.67" width="4.5" height="1" fill="#6a6a6a"/>
<rect x="950" y="589.98" width="4.5" height="1" fill="#6a6a6a"/>
<rect x="950" y="579.29" width="4.5" height="1" fill="#6a6a6a"/>
<rect x="947.5" y="568.6" width="7" height="1" fill="#6a6a6a"/>
<rect x="950" y="557.91" width="4.5" height="1" fill="#6a6a6a"/>
<rect x="950" y="547.22" width="4.5" height="1" fill="#6a6a6a"/>
<rect x="950" y="536.53" width="4.5" height="1" fill="#6a6a6a"/>
<rect x="950" y="525.84" width="4.5" height="1" fill="#6a6a6a"/>
<rect x="947.5" y="515.15" width="7" height="1" fill="#6a6a6a"/>
<rect x="950" y="504.46" width="4.5" height="1" fill="#6a6a6a"/>
<rect x="950" y="493.77" width="4.5" height="1" fill="#6a6a6a"/>
<rect x="950" y="483.08" width="4.5" height="1" fill="#6a6a6a"/>
<rect x="950" y="472.39" width="4.5" height="1" fill="#6a6a6a"/>
<rect x="947.5" y="461.7" width="7" height="1" fill="#6a6a6a"/>
<rect x="950" y="451.01" width="4.5" height="1" fill="#6a6a6a"/>
<rect x="950" y="440.32" width="4.5" height="1" fill="#6a6a6a"/>
<rect x="950" y="429.63" width="4.5" height="1" fill="#6a6a6a"/>
<rect x="954.0" y="462.73" width="49.62" height="213.27" fill="#9a9a9a"/>
<rect x="955.0" y="463.73" width="48.62" height="212.27" fill="#1e8fff"/>
<rect x="1003.62" y="576.05" width="49.62" height="99.95" fill="#9a9a9a"/>
<rect x="1004.62" y="577.05" width="48.62" height="98.95" fill="#1e8fff"/>
<rect x="1053.24" y="424.79" width="49.62" height="251.21" fill="#9a9a9a"/>
<rect x="1054.24" y="425.79" width="48.62" height="250.21" fill="#1e8fff"/>
<rect x="1102.86" y="503.36" width="49.62" height="172.64" fill="#9a9a9a"/>
<rect x="1103.86" y="504.36" width="48.62" height="171.64" fill="#1e8fff"/>
<rect x="1152.48" y="454.72" width="49.62" height="221.28" fill="#9a9a9a"/>
<rect x="1153.48" y="455.72" width="48.62" height="220.28" fill="#1e8fff"/>
<rect x="1202.1" y="517.25" width="49.62" height="158.75" fill="#9a9a9a"/>
<rect x="1203.1" y="518.25" width="48.62" height="157.75" fill="#1e8fff"/>
<rect x="1251.72" y="525.27" width="49.62" height="150.73" fill="#9a9a9a"/>
<rect x="1252.72" y="526.27" width="48.62" height="149.73" fill="#1e8fff"/>
<rect x="1301.34" y="641.79" width="49.62" height="34.21" fill="#9a9a9a"/>
<rect x="1302.34" y="642.79" width="48.62" height="33.21" fill="#1e8fff"/>
<rect x="954" y="675.5" width="397" height="1.2" fill="#b0a498"/>
<rect x="953.5" y="676" width="1" height="5.5" fill="#8a8a8a"/>
<rect x="1003.12" y="676" width="1" height="5.5" fill="#8a8a8a"/>
<rect x="1052.74" y="676" width="1" height="5.5" fill="#8a8a8a"/>
<rect x="1102.36" y="676" width="1" height="5.5" fill="#8a8a8a"/>
<rect x="1151.98" y="676" width="1" height="5.5" fill="#8a8a8a"/>
<rect x="1201.6" y="676" width="1" height="5.5" fill="#8a8a8a"/>
<rect x="1251.22" y="676" width="1" height="5.5" fill="#8a8a8a"/>
<rect x="1300.84" y="676" width="1" height="5.5" fill="#8a8a8a"/>
<rect x="1350.46" y="676" width="1" height="5.5" fill="#8a8a8a"/>
<rect x="1400.08" y="676" width="1" height="5.5" fill="#8a8a8a"/>
<rect x="1449.7" y="676" width="1" height="5.5" fill="#8a8a8a"/>
<text x="945.5" y="466.8" font-size="10.8" fill="#f1f1f1" text-anchor="end">20</text>
<text x="945.5" y="519.8" font-size="10.8" fill="#f1f1f1" text-anchor="end">15</text>
<text x="945.5" y="572.8" font-size="10.8" fill="#f1f1f1" text-anchor="end">10</text>
<text x="945.5" y="625.8" font-size="10.8" fill="#f1f1f1" text-anchor="end">5</text>
<text x="945.5" y="672.9" font-size="10.8" fill="#f1f1f1" text-anchor="end">0</text>
<text x="966.7" y="696" font-size="10.5" fill="#f1f1f1" text-anchor="middle" textLength="13.5" lengthAdjust="spacingAndGlyphs">0.0</text>
<text x="1004.6" y="696" font-size="10.5" fill="#f1f1f1" text-anchor="middle" textLength="19" lengthAdjust="spacingAndGlyphs">40.0</text>
<text x="1054" y="696" font-size="10.5" fill="#f1f1f1" text-anchor="middle" textLength="19" lengthAdjust="spacingAndGlyphs">80.0</text>
<text x="1103.5" y="696" font-size="10.5" fill="#f1f1f1" text-anchor="middle" textLength="24.5" lengthAdjust="spacingAndGlyphs">120.0</text>
<text x="1153" y="696" font-size="10.5" fill="#f1f1f1" text-anchor="middle" textLength="24.5" lengthAdjust="spacingAndGlyphs">160.0</text>
<text x="1203" y="696" font-size="10.5" fill="#f1f1f1" text-anchor="middle" textLength="24.5" lengthAdjust="spacingAndGlyphs">200.0</text>
<text x="1252.5" y="696" font-size="10.5" fill="#f1f1f1" text-anchor="middle" textLength="24.5" lengthAdjust="spacingAndGlyphs">240.0</text>
<text x="1302" y="696" font-size="10.5" fill="#f1f1f1" text-anchor="middle" textLength="24.5" lengthAdjust="spacingAndGlyphs">280.0</text>
<text x="1352" y="696" font-size="10.5" fill="#f1f1f1" text-anchor="middle" textLength="24.5" lengthAdjust="spacingAndGlyphs">320.0</text>
<text x="1401" y="696" font-size="10.5" fill="#f1f1f1" text-anchor="middle" textLength="24.5" lengthAdjust="spacingAndGlyphs">360.0</text>
<text x="1437.7" y="696" font-size="10.5" fill="#f1f1f1" text-anchor="middle" textLength="24.5" lengthAdjust="spacingAndGlyphs">400.0</text>
<text x="1159" y="712" font-size="10.5" fill="#f1f1f1" textLength="48" lengthAdjust="spacingAndGlyphs">vCar (kph)</text>
<text transform="translate(929,567.5) rotate(-90)" font-size="10.5" fill="#f1f1f1" textLength="40" lengthAdjust="spacingAndGlyphs">Seconds</text>
<text x="1183.5" y="683.4" font-size="17.5" fill="rgba(180,180,180,0.55)" textLength="139" lengthAdjust="spacingAndGlyphs">Activate Windows</text>
<text x="1183.5" y="701.8" font-size="13.4" fill="rgba(180,180,180,0.55)" textLength="209" lengthAdjust="spacingAndGlyphs">Go to Settings to activate Windows.</text>
<rect x="0" y="721" width="1455" height="16" fill="#007acc"/>
<text x="6" y="734.6" font-size="11" fill="#ffffff" textLength="28" lengthAdjust="spacingAndGlyphs">Ready</text>
<rect x="947.3" y="725.3" width="11.6" height="12" fill="#3a0a10"/>
<rect x="948.3" y="726.3" width="9.6" height="11" fill="#c8324e"/>
<text x="949.2" y="735.2" font-size="8.6" fill="#ffffff" textLength="7.8" lengthAdjust="spacingAndGlyphs">20</text>
<rect x="981.6" y="723.3" width="52.2" height="14" fill="#800000"/>
<text x="990.6" y="734.7" font-size="10.6" fill="#f4e8e8" textLength="35.5" lengthAdjust="spacingAndGlyphs">Alarm 1</text>
<rect x="1036.3" y="723.3" width="52.2" height="14" fill="#800000"/>
<text x="1045.3" y="734.7" font-size="10.6" fill="#f4e8e8" textLength="35.5" lengthAdjust="spacingAndGlyphs">Alarm 1</text>
<rect x="1091" y="723.3" width="52.2" height="14" fill="#800000"/>
<text x="1100" y="734.7" font-size="10.6" fill="#f4e8e8" textLength="35.5" lengthAdjust="spacingAndGlyphs">Alarm 1</text>
<rect x="1145.9" y="723.3" width="52.2" height="14" fill="#800000"/>
<text x="1154.9" y="734.7" font-size="10.6" fill="#f4e8e8" textLength="35.5" lengthAdjust="spacingAndGlyphs">Alarm 1</text>
<rect x="1200.8" y="723.3" width="52.2" height="14" fill="#800000"/>
<text x="1209.8" y="734.7" font-size="10.6" fill="#f4e8e8" textLength="35.5" lengthAdjust="spacingAndGlyphs">Alarm 1</text>
<rect x="1255.2" y="723.3" width="16.4" height="14" fill="#800000"/>
<text x="1257.6" y="734.7" font-size="10.6" fill="#f4e8e8" textLength="10.8" lengthAdjust="spacingAndGlyphs">21</text>
<rect x="1293.7" y="724.9" width="19" height="14" rx="2.5" fill="#2e3a48" stroke="#6a6a6a" stroke-width="1.1"/>
<text x="1303.2" y="734.9" font-size="9" fill="#8e8e8e" text-anchor="middle" textLength="15" lengthAdjust="spacingAndGlyphs">MSO</text>
<rect x="1317.5" y="724.9" width="19" height="14" rx="2.5" fill="#2e3a48" stroke="#6a6a6a" stroke-width="1.1"/>
<text x="1327" y="734.9" font-size="9" fill="#8e8e8e" text-anchor="middle" textLength="15" lengthAdjust="spacingAndGlyphs">FTR</text>
<rect x="1341.3" y="724.9" width="19" height="14" rx="2.5" fill="#2e3a48" stroke="#6a6a6a" stroke-width="1.1"/>
<text x="1350.8" y="734.9" font-size="9" fill="#8e8e8e" text-anchor="middle" textLength="15" lengthAdjust="spacingAndGlyphs">MSO</text>
<rect x="1365.4" y="724.9" width="19" height="14" rx="2.5" fill="#2e3a48" stroke="#6a6a6a" stroke-width="1.1"/>
<text x="1374.9" y="734.9" font-size="9" fill="#8e8e8e" text-anchor="middle" textLength="15" lengthAdjust="spacingAndGlyphs">ETN</text>
<rect x="1389.1" y="724.9" width="19" height="14" rx="2.5" fill="#2e3a48" stroke="#e8a030" stroke-width="1.1"/>
<text x="1398.6" y="734.9" font-size="9" fill="#ffffff" text-anchor="middle" textLength="15" lengthAdjust="spacingAndGlyphs">DST</text>
<rect x="1413.0" y="724.9" width="19" height="14" rx="2.5" fill="#2e3a48" stroke="#6a6a6a" stroke-width="1.1"/>
<text x="1422.5" y="734.9" font-size="9" fill="#8e8e8e" text-anchor="middle" textLength="15" lengthAdjust="spacingAndGlyphs">FTR</text>
</svg>
</body></html>
